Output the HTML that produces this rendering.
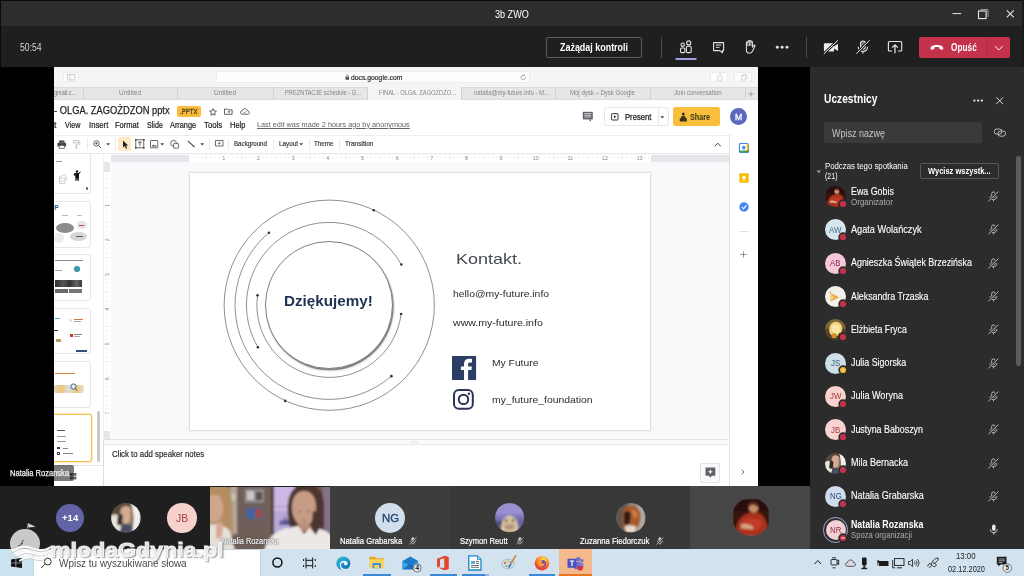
<!DOCTYPE html>
<html>
<head>
<meta charset="utf-8">
<title>3b ZWO</title>
<style>
*{box-sizing:border-box;margin:0;padding:0}
html,body{width:1024px;height:576px;overflow:hidden;background:#000}
body{font-family:"Liberation Sans",sans-serif;position:relative;color:#fff}
.abs{position:absolute}
.t{position:absolute;white-space:nowrap;transform-origin:0 50%;}
svg{overflow:visible}
</style>
</head>
<body>
<!-- chrome -->
<div class="abs" style="left:0px;top:0px;width:1024px;height:26px;background:#2d2d2d;border-top:1px solid #0c0c0c;"></div>
<div class="t" style="left:494.9px;top:9.5px;font-size:10.0px;height:10.0px;line-height:10.0px;color:#fff;transform:scaleX(0.908);">3b ZWO</div>
<svg class="abs" style="left:950px;top:5px;" width="70" height="18" viewBox="0 0 70 18">
      <path d="M2.5 8.6h8.7" stroke="#e8e8e8" stroke-width="1" fill="none"/>
      <path d="M30.5 4.5h7.5v7.5" stroke="#9a9a9a" stroke-width="1" fill="none"/>
      <rect x="28.5" y="6.0" width="7.6" height="7.6" stroke="#e8e8e8" stroke-width="1.1" fill="none"/>
      <path d="M56.8 5.4l7 7M63.8 5.4l-7 7" stroke="#e8e8e8" stroke-width="1.1" fill="none"/></svg>
<div class="abs" style="left:0px;top:26px;width:1024px;height:41px;background:#1f1f1f;"></div>
<div class="abs" style="left:0px;top:0px;width:1px;height:549px;background:#0a0a0a;"></div>
<div class="abs" style="left:1022px;top:0px;width:2px;height:67px;background:#191919;"></div>
<div class="t" style="left:19.7px;top:43.1px;font-size:10.3px;height:10.3px;line-height:10.3px;color:#d6d6d6;transform:scaleX(0.842);">50:54</div>
<div class="abs" style="left:546px;top:37px;width:96px;height:21px;background:#1f1f1f;border:1px solid #5c5c5c;border-radius:2px;"></div>
<div class="t" style="left:560.2px;top:42.0px;font-size:11.5px;height:11.5px;line-height:11.5px;color:#fff;font-weight:700;transform:scaleX(0.777);">Zażądaj kontroli</div>
<div class="abs" style="left:661px;top:37px;width:1px;height:21px;background:#4a4a4a;"></div>
<div class="abs" style="left:806px;top:37px;width:1px;height:21px;background:#4a4a4a;"></div>
<svg class="abs" style="left:676px;top:38px;" width="22" height="24" viewBox="0 0 22 24">
      <g fill="none" stroke="#e2e2e2" stroke-width="1.1">
      <circle cx="6.7" cy="6.7" r="1.7"/>
      <rect x="4.5" y="10.0" width="4.4" height="4.6" rx="1.1"/>
      <circle cx="12.7" cy="4.9" r="2.0"/>
      <rect x="10.4" y="8.3" width="4.8" height="6.3" rx="1.2"/>
      </g>
      <rect x="-0.7" y="20.0" width="21.4" height="1.9" rx="0.9" fill="#9ea0e6"/></svg>
<svg class="abs" style="left:712px;top:40px;" width="14" height="15" viewBox="0 0 14 15">
      <path d="M1.6 2.6h10v8h-1.2v2.3l-2.6-2.3H1.6z" fill="none" stroke="#e2e2e2" stroke-width="1.1" stroke-linejoin="round"/>
      <path d="M3.9 5.0h5.4M3.9 7.3h3.6" stroke="#e2e2e2" stroke-width="1"/></svg>
<svg class="abs" style="left:743px;top:39px;" width="14" height="16" viewBox="0 0 14 16">
      <path d="M3.4 8.6V3.6c0-.9 1.5-.9 1.5 0V2.4c0-.9 1.5-.9 1.5 0v-.3c0-.9 1.5-.9 1.5 0V3c0-.9 1.5-.9 1.5 0v5.2l1.4-1.9c.5-.6 1.6 0 1.2.8l-2.3 4.6c-.6 1.5-1.5 2.6-3.3 2.6-2 0-3-1.300-3-3.300V6.300" fill="none" stroke="#e2e2e2" stroke-width="1.05" stroke-linejoin="round" stroke-linecap="round"/>
      <path d="M4.9 3.6v3.6M6.4 2.4v4.600M7.900 3v4" stroke="#e2e2e2" stroke-width=".9" fill="none"/></svg>
<svg class="abs" style="left:774px;top:44px;" width="18" height="8" viewBox="0 0 18 8"><circle cx="3.3" cy="3.300" r="1.45" fill="#e2e2e2"/><circle cx="8.1" cy="3.3" r="1.45" fill="#e2e2e2"/><circle cx="13.0" cy="3.3" r="1.45" fill="#e2e2e2"/></svg>
<svg class="abs" style="left:822px;top:39px;" width="18" height="16" viewBox="0 0 18 16">
      <rect x="1.9" y="4.2" width="10.2" height="8.2" rx="1" fill="#f0f0f0"/>
      <path d="M12.1 7.3l3.9-2.6v7.3l-3.900-2.600z" fill="#f0f0f0"/>
      <path d="M1.4 15.300L16.400 0.900" stroke="#1f1f1f" stroke-width="2.600"/>
      <path d="M1.800 14.900L16.000 1.300" stroke="#f0f0f0" stroke-width="1.000"/></svg>
<svg class="abs" style="left:855px;top:39px;" width="16" height="16" viewBox="0 0 16 16">
      <rect x="5.5" y="1.900" width="4.900" height="8.300" rx="2.450" fill="rgba(226,226,226,.45)" stroke="#e2e2e2" stroke-width="1.05"/>
      <path d="M3.200 7.700c0 6.300 9.500 6.300 9.500 0M7.950 12.500v2.300" fill="none" stroke="#e2e2e2" stroke-width="1.05"/>
      <path d="M1.100 15.000L14.800 1.200" stroke="#1f1f1f" stroke-width="2.600"/>
      <path d="M1.300 14.800L14.600 1.300" stroke="#e2e2e2" stroke-width="1.000"/></svg>
<svg class="abs" style="left:887px;top:40px;" width="16" height="15" viewBox="0 0 16 15">
      <path d="M5.000 11.000H2.400c-.6 0-1-.4-1-1V2.500c0-.6.4-1 1-1h11.300c.6 0 1 .4 1 1V10c0 .6-.4 1-1 1h-2.600" fill="none" stroke="#e8e8e8" stroke-width="1.100"/>
      <path d="M8.000 13.300V5.000M5.200 7.700L8.000 4.900l2.800 2.800" fill="none" stroke="#e8e8e8" stroke-width="1.200"/></svg>
<div class="abs" style="left:919.4px;top:36.8px;width:90.2px;height:21.4px;background:#c4314b;border-radius:2px;"></div>
<div class="abs" style="left:987px;top:36.8px;width:1px;height:21.4px;background:#b12a42;"></div>
<svg class="abs" style="left:930px;top:44px;" width="14" height="7" viewBox="0 0 14 7"><path d="M0.600 4.300C0.600 2.000 3.700 1.000 6.900 1.000s6.300 1.000 6.300 3.300c0 .9-.3 1.500-.8 1.500l-2.500-.6c-.5-.1-.6-.5-.6-1.200V3.400C8.500 3.000 5.300 3.000 4.500 3.400V4.000c0 .7-.1 1.100-.6 1.200l-2.500.6c-.5 0-.8-.6-.8-1.500z" fill="#fff"/></svg>
<div class="t" style="left:951.0px;top:42.0px;font-size:11.5px;height:11.5px;line-height:11.5px;color:#fff;font-weight:700;transform:scaleX(0.721);">Opuść</div>
<svg class="abs" style="left:994px;top:45px;" width="10" height="6" viewBox="0 0 10 6"><path d="M0.800 1.000L4.800 5.000L8.800 1.000" fill="none" stroke="#fff" stroke-width="1.000"/></svg>
<!-- stage -->
<div class="abs" style="left:0px;top:67px;width:810px;height:419.4px;background:#000;"></div>
<div class="abs" style="left:54px;top:67px;width:703.6px;height:419.3px;background:#fff;overflow:hidden;"></div>
<div class="abs" style="left:54px;top:67px;width:703.6px;height:19.5px;background:#f5f5f5;"></div>
<div class="abs" style="left:62.7px;top:71.8px;width:16.1px;height:9.8px;background:#fdfdfd;border:1px solid #ececec;border-radius:2px;"></div>
<svg class="abs" style="left:66.5px;top:73.5px;" width="9" height="7" viewBox="0 0 9 7"><rect x=".500" y=".500" width="7.500" height="5.500" fill="none" stroke="#bdbdbd" stroke-width=".700"/><path d="M3.000 .500v5.500" stroke="#bdbdbd" stroke-width=".700"/></svg>
<div class="abs" style="left:215.5px;top:71.3px;width:314.5px;height:11.7px;background:#fdfdfd;border:1px solid #ececec;border-radius:2.500px;"></div>
<svg class="abs" style="left:344.5px;top:73.8px;" width="5" height="7" viewBox="0 0 5 7"><rect x=".500" y="2.800" width="3.600" height="3.000" fill="#555"/><path d="M1.200 2.800V1.900c0-1.400 2.200-1.400 2.200 0v.900" fill="none" stroke="#555" stroke-width=".600"/></svg>
<div class="t" style="left:351.0px;top:73.8px;font-size:7.2px;height:7.2px;line-height:7.2px;color:#2a2a2a;transform:scaleX(0.946);-webkit-text-stroke:.200px #2a2a2a;">docs.google.com</div>
<svg class="abs" style="left:520px;top:73.5px;" width="7" height="7" viewBox="0 0 7 7"><path d="M5.600 3.400a2.300 2.300 0 1 1-.8-1.700" fill="none" stroke="#8a8a8a" stroke-width=".700"/><path d="M4.000 .400l1.200 1.300-1.600.500z" fill="#8a8a8a"/></svg>
<div class="abs" style="left:710.4px;top:72px;width:18px;height:10px;background:#fdfdfd;border:1px solid #ececec;border-radius:2px;"></div>
<div class="abs" style="left:734.4px;top:72px;width:18px;height:10px;background:#fdfdfd;border:1px solid #ececec;border-radius:2px;"></div>
<svg class="abs" style="left:716.5px;top:73.3px;" width="6" height="8" viewBox="0 0 6 8"><path d="M1.800 2.800H.600v4.400h4.600V2.800H4.000M2.900 4.600V.600M1.800 1.600L2.900.500l1.100 1.100" fill="none" stroke="#c4c4c4" stroke-width=".600"/></svg>
<svg class="abs" style="left:740.5px;top:73.8px;" width="7" height="7" viewBox="0 0 7 7"><rect x=".500" y="1.800" width="4.200" height="4.200" fill="none" stroke="#c4c4c4" stroke-width=".600"/><path d="M1.900 1.800V.500h4.200v4.200H4.700" fill="none" stroke="#c4c4c4" stroke-width=".600"/></svg>
<div class="abs" style="left:54px;top:86.5px;width:703.6px;height:13.5px;background:#e6e6e6;border-top:1px solid #dadada;border-bottom:1px solid #dcdcdc;"></div>
<div class="abs" style="left:367px;top:87px;width:94.3px;height:13.0px;background:#f5f5f5;"></div>
<div class="abs" style="left:82.5px;top:87px;width:1px;height:12.5px;background:#d2d2d2;"></div>
<div class="abs" style="left:177.4px;top:87px;width:1px;height:12.5px;background:#d2d2d2;"></div>
<div class="abs" style="left:272.7px;top:87px;width:1px;height:12.5px;background:#d2d2d2;"></div>
<div class="abs" style="left:367px;top:87px;width:1px;height:12.5px;background:#d2d2d2;"></div>
<div class="abs" style="left:461.3px;top:87px;width:1px;height:12.5px;background:#d2d2d2;"></div>
<div class="abs" style="left:555.4px;top:87px;width:1px;height:12.5px;background:#d2d2d2;"></div>
<div class="abs" style="left:650.3px;top:87px;width:1px;height:12.5px;background:#d2d2d2;"></div>
<div class="abs" style="left:745.2px;top:87px;width:1px;height:12.5px;background:#d2d2d2;"></div>
<div class="t" style="left:118.9px;top:90.2px;font-size:6.3px;height:6.3px;line-height:6.3px;color:#858585;transform:scaleX(1.030);">Untitled</div>
<div class="t" style="left:214.1px;top:90.2px;font-size:6.3px;height:6.3px;line-height:6.3px;color:#858585;transform:scaleX(1.030);">Untitled</div>
<div class="t" style="left:285.2px;top:90.2px;font-size:6.3px;height:6.3px;line-height:6.3px;color:#858585;transform:scaleX(0.910);">PREZNTACJE schedule - G...</div>
<div class="t" style="left:379.0px;top:90.2px;font-size:6.3px;height:6.3px;line-height:6.3px;color:#858585;transform:scaleX(0.912);">FINAL - OLGA. ZAGOŻDZO...</div>
<div class="t" style="left:474.2px;top:90.2px;font-size:6.3px;height:6.3px;line-height:6.3px;color:#858585;transform:scaleX(0.943);">natalia@my-future.info - M...</div>
<div class="t" style="left:570.3px;top:90.2px;font-size:6.3px;height:6.3px;line-height:6.3px;color:#858585;transform:scaleX(0.957);">Mój dysk – Dysk Google</div>
<div class="t" style="left:674.0px;top:90.2px;font-size:6.3px;height:6.3px;line-height:6.3px;color:#858585;transform:scaleX(0.971);">Join conversation</div>
<div class="t" style="left:54.2px;top:90.2px;font-size:6.3px;height:6.3px;line-height:6.3px;color:#7a7a7a;transform:scaleX(0.873);">gmail.c...</div>
<svg class="abs" style="left:747.5px;top:90.5px;" width="6" height="6" viewBox="0 0 6 6"><path d="M3.000 .500v5.000M.500 3.000h5.000" stroke="#8a8a8a" stroke-width=".700"/></svg>
<div class="t" style="left:54.4px;top:105.1px;font-size:11.2px;height:11.2px;line-height:11.2px;color:#1f1f1f;transform:scaleX(0.834);-webkit-text-stroke:.250px #1f1f1f;">- OLGA. ZAGOŻDZON pptx</div>
<div class="abs" style="left:177px;top:106px;width:24.4px;height:10.5px;background:#f9bc3b;border-radius:2px;"></div>
<div class="t" style="left:179.7px;top:108.6px;font-size:6.8px;height:6.8px;line-height:6.8px;color:#4f401c;transform:scaleX(0.896);-webkit-text-stroke:.300px #4f401c;">.PPTX</div>
<svg class="abs" style="left:209px;top:107.5px;" width="8" height="8" viewBox="0 0 8 8"><path d="M4.000 .700l1.000 2.200 2.400.300-1.800 1.600.500 2.400L4.000 6.000 1.900 7.200l.500-2.400L.600 3.200l2.400-.300z" fill="none" stroke="#4a4d51" stroke-width=".900" stroke-linejoin="round"/></svg>
<svg class="abs" style="left:224px;top:108px;" width="9" height="7" viewBox="0 0 9 7"><path d="M.500 1.000h2.800l.800.900h4.000v4.400H.500z" fill="none" stroke="#4a4d51" stroke-width=".900"/><path d="M3.300 3.900h2.400M4.900 3.000l.900.900-.900.900" fill="none" stroke="#4a4d51" stroke-width=".750"/></svg>
<svg class="abs" style="left:240px;top:108px;" width="10" height="7" viewBox="0 0 10 7"><path d="M2.500 6.200c-1.200 0-2.000-.700-2.000-1.700 0-1.000.800-1.700 1.800-1.700.300-1.300 1.300-2.100 2.600-2.100 1.300 0 2.400.900 2.600 2.200 1.000 0 1.800.700 1.800 1.700 0 .900-.800 1.600-1.800 1.600z" fill="none" stroke="#4a4d51" stroke-width=".900"/><path d="M3.600 3.900l.900.900 1.500-1.500" fill="none" stroke="#4a4d51" stroke-width=".750"/></svg>
<div class="t" style="left:54.4px;top:120.7px;font-size:8.6px;height:8.6px;line-height:8.6px;color:#202124;transform:scaleX(1.005);-webkit-text-stroke:.200px #202124;">t</div>
<div class="t" style="left:65.1px;top:120.7px;font-size:8.6px;height:8.6px;line-height:8.6px;color:#202124;transform:scaleX(0.833);-webkit-text-stroke:.200px #202124;">View</div>
<div class="t" style="left:88.6px;top:120.7px;font-size:8.6px;height:8.6px;line-height:8.6px;color:#202124;transform:scaleX(0.897);-webkit-text-stroke:.200px #202124;">Insert</div>
<div class="t" style="left:115.2px;top:120.7px;font-size:8.6px;height:8.6px;line-height:8.6px;color:#202124;transform:scaleX(0.877);-webkit-text-stroke:.200px #202124;">Format</div>
<div class="t" style="left:146.9px;top:120.7px;font-size:8.6px;height:8.6px;line-height:8.6px;color:#202124;transform:scaleX(0.831);-webkit-text-stroke:.200px #202124;">Slide</div>
<div class="t" style="left:170.4px;top:120.7px;font-size:8.6px;height:8.6px;line-height:8.6px;color:#202124;transform:scaleX(0.853);-webkit-text-stroke:.200px #202124;">Arrange</div>
<div class="t" style="left:204.3px;top:120.7px;font-size:8.6px;height:8.6px;line-height:8.6px;color:#202124;transform:scaleX(0.902);-webkit-text-stroke:.200px #202124;">Tools</div>
<div class="t" style="left:229.9px;top:120.7px;font-size:8.6px;height:8.6px;line-height:8.6px;color:#202124;transform:scaleX(0.871);-webkit-text-stroke:.200px #202124;">Help</div>
<div class="t" style="left:256.8px;top:121.0px;font-size:8.0px;height:8.0px;line-height:8.0px;color:#5f6368;transform:scaleX(0.911);text-decoration:underline;">Last edit was made 2 hours ago by anonymous</div>
<svg class="abs" style="left:582px;top:110.5px;" width="12" height="12" viewBox="0 0 12 12"><path d="M.800 .800h10.000v7.600H4.500v0H.800z" fill="#5f6368"/><path d="M8.800 8.400v2.400l-2.400-2.400z" fill="#5f6368"/><path d="M2.300 2.600h7.000M2.300 4.300h7.000M2.300 6.000h7.000" stroke="#fff" stroke-width=".700"/></svg>
<div class="abs" style="left:604.2px;top:107.3px;width:64.6px;height:18.7px;background:#fff;border:1px solid #e6e7ea;border-radius:2.500px;"></div>
<div class="abs" style="left:657.5px;top:107.3px;width:1px;height:18.7px;background:#e6e7ea;"></div>
<svg class="abs" style="left:611px;top:113px;" width="8" height="8" viewBox="0 0 8 8"><rect x=".600" y=".600" width="6.400" height="6.400" rx=".600" fill="none" stroke="#202124" stroke-width=".900"/><path d="M3.000 2.300l2.200 1.500-2.200 1.500z" fill="#202124"/></svg>
<div class="t" style="left:625.0px;top:112.5px;font-size:8.3px;height:8.3px;line-height:8.3px;color:#202124;transform:scaleX(0.926);-webkit-text-stroke:.250px #202124;">Present</div>
<svg class="abs" style="left:660.3px;top:115.5px;" width="5" height="3" viewBox="0 0 5 3"><path d="M.300 .300h4.000L2.300 2.600z" fill="#444"/></svg>
<div class="abs" style="left:673.1px;top:107.3px;width:46.5px;height:18.7px;background:#f9bf3c;border-radius:2.500px;"></div>
<svg class="abs" style="left:679px;top:111.5px;" width="9" height="10" viewBox="0 0 9 10"><circle cx="4.300" cy="2.000" r="1.500" fill="#3c3416"/><path d="M2.000 6.000c0-1.500 1.000-2.200 2.300-2.200s2.300.700 2.300 2.200z" fill="#3c3416"/><rect x=".800" y="6.000" width="7.000" height="3.500" rx=".500" fill="#3c3416"/></svg>
<div class="t" style="left:690.3px;top:112.5px;font-size:8.3px;height:8.3px;line-height:8.3px;color:#3c3416;font-weight:700;transform:scaleX(0.871);">Share</div>
<div class="abs" style="left:730px;top:107.9px;width:17.2px;height:17.2px;background:#5b6abf;border-radius:50%;"></div>
<div class="t" style="left:735.1px;top:111.8px;font-size:9.8px;height:9.8px;line-height:9.8px;color:#fff;transform:scaleX(0.882);-webkit-text-stroke:.300px #fff;">M</div>
<div class="abs" style="left:54px;top:134.5px;width:674.6px;height:1px;background:#eeeeee;"></div>
<div class="abs" style="left:54px;top:153.3px;width:674.6px;height:1px;background:#e9e9e9;"></div>
<svg class="abs" style="left:57.3px;top:139.5px;" width="10" height="9" viewBox="0 0 10 9"><rect x="2.000" y=".500" width="5.500" height="2.200" fill="#444746"/><rect x=".400" y="2.800" width="8.700" height="3.800" rx=".600" fill="#444746"/><rect x="2.200" y="5.300" width="5.000" height="3.000" fill="#fff" stroke="#444746" stroke-width=".700"/></svg>
<svg class="abs" style="left:73px;top:139.5px;" width="8" height="9" viewBox="0 0 8 9"><rect x=".500" y=".500" width="5.000" height="2.300" fill="none" stroke="#bdbdbd" stroke-width=".800"/><path d="M5.500 1.600h1.300v2.500H3.300v1.300" fill="none" stroke="#bdbdbd" stroke-width=".700"/><rect x="2.600" y="5.300" width="1.500" height="3.300" fill="#bdbdbd"/></svg>
<div class="abs" style="left:86.6px;top:138.5px;width:1px;height:11px;background:#ebebeb;"></div>
<div class="abs" style="left:115.4px;top:138.5px;width:1px;height:11px;background:#ebebeb;"></div>
<div class="abs" style="left:209.2px;top:138.5px;width:1px;height:11px;background:#ebebeb;"></div>
<div class="abs" style="left:228.2px;top:138.5px;width:1px;height:11px;background:#ebebeb;"></div>
<div class="abs" style="left:272.7px;top:138.5px;width:1px;height:11px;background:#ebebeb;"></div>
<div class="abs" style="left:308.6px;top:138.5px;width:1px;height:11px;background:#ebebeb;"></div>
<div class="abs" style="left:339px;top:138.5px;width:1px;height:11px;background:#ebebeb;"></div>
<svg class="abs" style="left:92.5px;top:139.5px;" width="9" height="9" viewBox="0 0 9 9"><circle cx="3.400" cy="3.400" r="2.700" fill="none" stroke="#444746" stroke-width=".800"/><path d="M5.400 5.400L8.000 8.000M2.100 3.400h2.600M3.400 2.100v2.600" stroke="#444746" stroke-width=".800"/></svg>
<svg class="abs" style="left:105.9px;top:143px;" width="5" height="3" viewBox="0 0 5 3"><path d="M.300 .300h3.800L2.200 2.400z" fill="#444746"/></svg>
<div class="abs" style="left:117.9px;top:137.4px;width:12.8px;height:13.2px;background:#fdeac4;border-radius:1.500px;"></div>
<svg class="abs" style="left:121.5px;top:139.5px;" width="7" height="10" viewBox="0 0 7 10"><path d="M1.000 .500v7.000l1.700-1.600 1.200 2.800 1.200-.500-1.200-2.700h2.300z" fill="#1f1f1f"/></svg>
<svg class="abs" style="left:134.5px;top:139px;" width="10" height="10" viewBox="0 0 10 10"><rect x=".800" y=".800" width="8.000" height="8.000" fill="none" stroke="#444746" stroke-width=".800"/><path d="M3.000 3.200h3.800M4.900 3.200v3.800" stroke="#444746" stroke-width=".900"/><rect x="0" y="0" width="1.600" height="1.600" fill="#444746"/><rect x="8.000" y="0" width="1.600" height="1.600" fill="#444746"/><rect x="0" y="8.000" width="1.600" height="1.600" fill="#444746"/><rect x="8.000" y="8.000" width="1.600" height="1.600" fill="#444746"/></svg>
<svg class="abs" style="left:149.5px;top:139.5px;" width="9" height="9" viewBox="0 0 9 9"><rect x=".500" y=".500" width="7.300" height="7.300" rx=".500" fill="none" stroke="#444746" stroke-width=".800"/><path d="M1.500 6.500l1.800-2.000 1.300 1.300.900-.900 1.500 1.600z" fill="#444746"/></svg>
<svg class="abs" style="left:159.8px;top:143px;" width="5" height="3" viewBox="0 0 5 3"><path d="M.300 .300h3.800L2.200 2.400z" fill="#444746"/></svg>
<svg class="abs" style="left:170px;top:139.5px;" width="10" height="9" viewBox="0 0 10 9"><circle cx="3.600" cy="3.300" r="2.900" fill="none" stroke="#444746" stroke-width=".800"/><rect x="3.600" y="3.600" width="5.000" height="4.600" rx=".500" fill="#fff" stroke="#444746" stroke-width=".800"/></svg>
<svg class="abs" style="left:186.5px;top:140px;" width="9" height="8" viewBox="0 0 9 8"><path d="M.800 .800L7.500 7.000" stroke="#444746" stroke-width="1.100"/></svg>
<svg class="abs" style="left:199.9px;top:143px;" width="5" height="3" viewBox="0 0 5 3"><path d="M.300 .300h3.800L2.200 2.400z" fill="#444746"/></svg>
<svg class="abs" style="left:214.5px;top:139.5px;" width="9" height="9" viewBox="0 0 9 9"><path d="M.500 .500h7.500v5.500H4.000v0H.500z" fill="none" stroke="#444746" stroke-width=".800"/><path d="M4.300 1.800v2.800M2.900 3.200h2.800" stroke="#444746" stroke-width=".700"/></svg>
<div class="t" style="left:234.3px;top:140.4px;font-size:7.0px;height:7.0px;line-height:7.0px;color:#3c4043;transform:scaleX(0.883);-webkit-text-stroke:.200px #3c4043;">Background</div>
<div class="t" style="left:278.9px;top:140.4px;font-size:7.0px;height:7.0px;line-height:7.0px;color:#3c4043;transform:scaleX(0.904);-webkit-text-stroke:.200px #3c4043;">Layout</div>
<svg class="abs" style="left:299.0px;top:143px;" width="5" height="3" viewBox="0 0 5 3"><path d="M.300 .300h3.800L2.200 2.400z" fill="#444746"/></svg>
<div class="t" style="left:313.7px;top:140.4px;font-size:7.0px;height:7.0px;line-height:7.0px;color:#3c4043;transform:scaleX(0.895);-webkit-text-stroke:.200px #3c4043;">Theme</div>
<div class="t" style="left:344.5px;top:140.4px;font-size:7.0px;height:7.0px;line-height:7.0px;color:#3c4043;transform:scaleX(0.935);-webkit-text-stroke:.200px #3c4043;">Transition</div>
<svg class="abs" style="left:713.5px;top:141.5px;" width="8" height="5" viewBox="0 0 8 5"><path d="M.800 4.300L3.800 1.200l3.000 3.100" fill="none" stroke="#444" stroke-width="1.000"/></svg>
<div class="abs" style="left:110.5px;top:154.3px;width:618px;height:284.3px;background:#f8f9fb;"></div>
<div class="abs" style="left:110.5px;top:154.6px;width:618px;height:7.0px;background:#e5e6eb;"></div>
<div class="abs" style="left:189.2px;top:154.6px;width:461.5px;height:7.0px;background:#fff;"></div>
<svg class="abs" style="left:0px;top:0px;" width="1024" height="576" viewBox="0 0 1024 576"><text x="223.8" y="160.0" font-size="5.2" fill="#80868b" text-anchor="middle" font-family="Liberation Sans">1</text><text x="258.5" y="160.0" font-size="5.2" fill="#80868b" text-anchor="middle" font-family="Liberation Sans">2</text><text x="293.1" y="160.0" font-size="5.2" fill="#80868b" text-anchor="middle" font-family="Liberation Sans">3</text><text x="327.8" y="160.0" font-size="5.2" fill="#80868b" text-anchor="middle" font-family="Liberation Sans">4</text><text x="362.4" y="160.0" font-size="5.2" fill="#80868b" text-anchor="middle" font-family="Liberation Sans">5</text><text x="397.1" y="160.0" font-size="5.2" fill="#80868b" text-anchor="middle" font-family="Liberation Sans">6</text><text x="431.8" y="160.0" font-size="5.2" fill="#80868b" text-anchor="middle" font-family="Liberation Sans">7</text><text x="466.4" y="160.0" font-size="5.2" fill="#80868b" text-anchor="middle" font-family="Liberation Sans">8</text><text x="501.0" y="160.0" font-size="5.2" fill="#80868b" text-anchor="middle" font-family="Liberation Sans">9</text><text x="535.7" y="160.0" font-size="5.2" fill="#80868b" text-anchor="middle" font-family="Liberation Sans">10</text><text x="570.3" y="160.0" font-size="5.2" fill="#80868b" text-anchor="middle" font-family="Liberation Sans">11</text><text x="605.0" y="160.0" font-size="5.2" fill="#80868b" text-anchor="middle" font-family="Liberation Sans">12</text><text x="639.6" y="160.0" font-size="5.2" fill="#80868b" text-anchor="middle" font-family="Liberation Sans">13</text><rect x="193.5" y="157.0" width=".500" height="1.3" fill="#c3c6ca"/><rect x="197.9" y="157.0" width=".500" height="1.3" fill="#c3c6ca"/><rect x="202.2" y="157.0" width=".500" height="1.3" fill="#c3c6ca"/><rect x="206.5" y="156.2" width=".500" height="2.8" fill="#c3c6ca"/><rect x="210.9" y="157.0" width=".500" height="1.3" fill="#c3c6ca"/><rect x="215.2" y="157.0" width=".500" height="1.3" fill="#c3c6ca"/><rect x="219.5" y="157.0" width=".500" height="1.3" fill="#c3c6ca"/><rect x="228.2" y="157.0" width=".500" height="1.3" fill="#c3c6ca"/><rect x="232.5" y="157.0" width=".500" height="1.3" fill="#c3c6ca"/><rect x="236.8" y="157.0" width=".500" height="1.3" fill="#c3c6ca"/><rect x="241.2" y="156.2" width=".500" height="2.8" fill="#c3c6ca"/><rect x="245.5" y="157.0" width=".500" height="1.3" fill="#c3c6ca"/><rect x="249.8" y="157.0" width=".500" height="1.3" fill="#c3c6ca"/><rect x="254.2" y="157.0" width=".500" height="1.3" fill="#c3c6ca"/><rect x="262.8" y="157.0" width=".500" height="1.3" fill="#c3c6ca"/><rect x="267.2" y="157.0" width=".500" height="1.3" fill="#c3c6ca"/><rect x="271.5" y="157.0" width=".500" height="1.3" fill="#c3c6ca"/><rect x="275.8" y="156.2" width=".500" height="2.8" fill="#c3c6ca"/><rect x="280.2" y="157.0" width=".500" height="1.3" fill="#c3c6ca"/><rect x="284.5" y="157.0" width=".500" height="1.3" fill="#c3c6ca"/><rect x="288.8" y="157.0" width=".500" height="1.3" fill="#c3c6ca"/><rect x="297.5" y="157.0" width=".500" height="1.3" fill="#c3c6ca"/><rect x="301.8" y="157.0" width=".500" height="1.3" fill="#c3c6ca"/><rect x="306.1" y="157.0" width=".500" height="1.3" fill="#c3c6ca"/><rect x="310.5" y="156.2" width=".500" height="2.8" fill="#c3c6ca"/><rect x="314.8" y="157.0" width=".500" height="1.3" fill="#c3c6ca"/><rect x="319.1" y="157.0" width=".500" height="1.3" fill="#c3c6ca"/><rect x="323.5" y="157.0" width=".500" height="1.3" fill="#c3c6ca"/><rect x="332.1" y="157.0" width=".500" height="1.3" fill="#c3c6ca"/><rect x="336.5" y="157.0" width=".500" height="1.3" fill="#c3c6ca"/><rect x="340.8" y="157.0" width=".500" height="1.3" fill="#c3c6ca"/><rect x="345.1" y="156.2" width=".500" height="2.8" fill="#c3c6ca"/><rect x="349.5" y="157.0" width=".500" height="1.3" fill="#c3c6ca"/><rect x="353.8" y="157.0" width=".500" height="1.3" fill="#c3c6ca"/><rect x="358.1" y="157.0" width=".500" height="1.3" fill="#c3c6ca"/><rect x="366.8" y="157.0" width=".500" height="1.3" fill="#c3c6ca"/><rect x="371.1" y="157.0" width=".500" height="1.3" fill="#c3c6ca"/><rect x="375.4" y="157.0" width=".500" height="1.3" fill="#c3c6ca"/><rect x="379.8" y="156.2" width=".500" height="2.8" fill="#c3c6ca"/><rect x="384.1" y="157.0" width=".500" height="1.3" fill="#c3c6ca"/><rect x="388.4" y="157.0" width=".500" height="1.3" fill="#c3c6ca"/><rect x="392.8" y="157.0" width=".500" height="1.3" fill="#c3c6ca"/><rect x="401.4" y="157.0" width=".500" height="1.3" fill="#c3c6ca"/><rect x="405.8" y="157.0" width=".500" height="1.3" fill="#c3c6ca"/><rect x="410.1" y="157.0" width=".500" height="1.3" fill="#c3c6ca"/><rect x="414.4" y="156.2" width=".500" height="2.8" fill="#c3c6ca"/><rect x="418.8" y="157.0" width=".500" height="1.3" fill="#c3c6ca"/><rect x="423.1" y="157.0" width=".500" height="1.3" fill="#c3c6ca"/><rect x="427.4" y="157.0" width=".500" height="1.3" fill="#c3c6ca"/><rect x="436.1" y="157.0" width=".500" height="1.3" fill="#c3c6ca"/><rect x="440.4" y="157.0" width=".500" height="1.3" fill="#c3c6ca"/><rect x="444.7" y="157.0" width=".500" height="1.3" fill="#c3c6ca"/><rect x="449.1" y="156.2" width=".500" height="2.8" fill="#c3c6ca"/><rect x="453.4" y="157.0" width=".500" height="1.3" fill="#c3c6ca"/><rect x="457.7" y="157.0" width=".500" height="1.3" fill="#c3c6ca"/><rect x="462.1" y="157.0" width=".500" height="1.3" fill="#c3c6ca"/><rect x="470.7" y="157.0" width=".500" height="1.3" fill="#c3c6ca"/><rect x="475.1" y="157.0" width=".500" height="1.3" fill="#c3c6ca"/><rect x="479.4" y="157.0" width=".500" height="1.3" fill="#c3c6ca"/><rect x="483.7" y="156.2" width=".500" height="2.8" fill="#c3c6ca"/><rect x="488.1" y="157.0" width=".500" height="1.3" fill="#c3c6ca"/><rect x="492.4" y="157.0" width=".500" height="1.3" fill="#c3c6ca"/><rect x="496.7" y="157.0" width=".500" height="1.3" fill="#c3c6ca"/><rect x="505.4" y="157.0" width=".500" height="1.3" fill="#c3c6ca"/><rect x="509.7" y="157.0" width=".500" height="1.3" fill="#c3c6ca"/><rect x="514.0" y="157.0" width=".500" height="1.3" fill="#c3c6ca"/><rect x="518.4" y="156.2" width=".500" height="2.8" fill="#c3c6ca"/><rect x="522.7" y="157.0" width=".500" height="1.3" fill="#c3c6ca"/><rect x="527.0" y="157.0" width=".500" height="1.3" fill="#c3c6ca"/><rect x="531.4" y="157.0" width=".500" height="1.3" fill="#c3c6ca"/><rect x="540.0" y="157.0" width=".500" height="1.3" fill="#c3c6ca"/><rect x="544.4" y="157.0" width=".500" height="1.3" fill="#c3c6ca"/><rect x="548.7" y="157.0" width=".500" height="1.3" fill="#c3c6ca"/><rect x="553.0" y="156.2" width=".500" height="2.8" fill="#c3c6ca"/><rect x="557.4" y="157.0" width=".500" height="1.3" fill="#c3c6ca"/><rect x="561.7" y="157.0" width=".500" height="1.3" fill="#c3c6ca"/><rect x="566.0" y="157.0" width=".500" height="1.3" fill="#c3c6ca"/><rect x="574.7" y="157.0" width=".500" height="1.3" fill="#c3c6ca"/><rect x="579.0" y="157.0" width=".500" height="1.3" fill="#c3c6ca"/><rect x="583.3" y="157.0" width=".500" height="1.3" fill="#c3c6ca"/><rect x="587.7" y="156.2" width=".500" height="2.8" fill="#c3c6ca"/><rect x="592.0" y="157.0" width=".500" height="1.3" fill="#c3c6ca"/><rect x="596.3" y="157.0" width=".500" height="1.3" fill="#c3c6ca"/><rect x="600.7" y="157.0" width=".500" height="1.3" fill="#c3c6ca"/><rect x="609.3" y="157.0" width=".500" height="1.3" fill="#c3c6ca"/><rect x="613.7" y="157.0" width=".500" height="1.3" fill="#c3c6ca"/><rect x="618.0" y="157.0" width=".500" height="1.3" fill="#c3c6ca"/><rect x="622.3" y="156.2" width=".500" height="2.8" fill="#c3c6ca"/><rect x="626.7" y="157.0" width=".500" height="1.3" fill="#c3c6ca"/><rect x="631.0" y="157.0" width=".500" height="1.3" fill="#c3c6ca"/><rect x="635.3" y="157.0" width=".500" height="1.3" fill="#c3c6ca"/><rect x="644.0" y="157.0" width=".500" height="1.3" fill="#c3c6ca"/><rect x="648.3" y="157.0" width=".500" height="1.3" fill="#c3c6ca"/></svg>
<div class="abs" style="left:103.8px;top:161.6px;width:6.7px;height:277.0px;background:#e5e6eb;"></div>
<div class="abs" style="left:103.8px;top:171.5px;width:6.7px;height:259.8px;background:#fff;"></div>
<svg class="abs" style="left:0px;top:0px;" width="1024" height="576" viewBox="0 0 1024 576"><text x="0" y="0" font-size="5.2" fill="#80868b" text-anchor="middle" font-family="Liberation Sans" transform="translate(109.2 205.2) rotate(-90)">1</text><text x="0" y="0" font-size="5.2" fill="#80868b" text-anchor="middle" font-family="Liberation Sans" transform="translate(109.2 239.9) rotate(-90)">2</text><text x="0" y="0" font-size="5.2" fill="#80868b" text-anchor="middle" font-family="Liberation Sans" transform="translate(109.2 274.5) rotate(-90)">3</text><text x="0" y="0" font-size="5.2" fill="#80868b" text-anchor="middle" font-family="Liberation Sans" transform="translate(109.2 309.2) rotate(-90)">4</text><text x="0" y="0" font-size="5.2" fill="#80868b" text-anchor="middle" font-family="Liberation Sans" transform="translate(109.2 343.9) rotate(-90)">5</text><text x="0" y="0" font-size="5.2" fill="#80868b" text-anchor="middle" font-family="Liberation Sans" transform="translate(109.2 378.5) rotate(-90)">6</text><text x="0" y="0" font-size="5.2" fill="#80868b" text-anchor="middle" font-family="Liberation Sans" transform="translate(109.2 413.1) rotate(-90)">7</text><rect x="106.0" y="174.9" width="1.3" height=".500" fill="#c3c6ca"/><rect x="106.0" y="179.3" width="1.3" height=".500" fill="#c3c6ca"/><rect x="106.0" y="183.6" width="1.3" height=".500" fill="#c3c6ca"/><rect x="105.2" y="187.9" width="2.8" height=".500" fill="#c3c6ca"/><rect x="106.0" y="192.3" width="1.3" height=".500" fill="#c3c6ca"/><rect x="106.0" y="196.6" width="1.3" height=".500" fill="#c3c6ca"/><rect x="106.0" y="200.9" width="1.3" height=".500" fill="#c3c6ca"/><rect x="106.0" y="209.6" width="1.3" height=".500" fill="#c3c6ca"/><rect x="106.0" y="213.9" width="1.3" height=".500" fill="#c3c6ca"/><rect x="106.0" y="218.2" width="1.3" height=".500" fill="#c3c6ca"/><rect x="105.2" y="222.6" width="2.8" height=".500" fill="#c3c6ca"/><rect x="106.0" y="226.9" width="1.3" height=".500" fill="#c3c6ca"/><rect x="106.0" y="231.2" width="1.3" height=".500" fill="#c3c6ca"/><rect x="106.0" y="235.6" width="1.3" height=".500" fill="#c3c6ca"/><rect x="106.0" y="244.2" width="1.3" height=".500" fill="#c3c6ca"/><rect x="106.0" y="248.6" width="1.3" height=".500" fill="#c3c6ca"/><rect x="106.0" y="252.9" width="1.3" height=".500" fill="#c3c6ca"/><rect x="105.2" y="257.2" width="2.8" height=".500" fill="#c3c6ca"/><rect x="106.0" y="261.6" width="1.3" height=".500" fill="#c3c6ca"/><rect x="106.0" y="265.9" width="1.3" height=".500" fill="#c3c6ca"/><rect x="106.0" y="270.2" width="1.3" height=".500" fill="#c3c6ca"/><rect x="106.0" y="278.9" width="1.3" height=".500" fill="#c3c6ca"/><rect x="106.0" y="283.2" width="1.3" height=".500" fill="#c3c6ca"/><rect x="106.0" y="287.5" width="1.3" height=".500" fill="#c3c6ca"/><rect x="105.2" y="291.9" width="2.8" height=".500" fill="#c3c6ca"/><rect x="106.0" y="296.2" width="1.3" height=".500" fill="#c3c6ca"/><rect x="106.0" y="300.5" width="1.3" height=".500" fill="#c3c6ca"/><rect x="106.0" y="304.9" width="1.3" height=".500" fill="#c3c6ca"/><rect x="106.0" y="313.5" width="1.3" height=".500" fill="#c3c6ca"/><rect x="106.0" y="317.9" width="1.3" height=".500" fill="#c3c6ca"/><rect x="106.0" y="322.2" width="1.3" height=".500" fill="#c3c6ca"/><rect x="105.2" y="326.5" width="2.8" height=".500" fill="#c3c6ca"/><rect x="106.0" y="330.9" width="1.3" height=".500" fill="#c3c6ca"/><rect x="106.0" y="335.2" width="1.3" height=".500" fill="#c3c6ca"/><rect x="106.0" y="339.5" width="1.3" height=".500" fill="#c3c6ca"/><rect x="106.0" y="348.2" width="1.3" height=".500" fill="#c3c6ca"/><rect x="106.0" y="352.5" width="1.3" height=".500" fill="#c3c6ca"/><rect x="106.0" y="356.8" width="1.3" height=".500" fill="#c3c6ca"/><rect x="105.2" y="361.2" width="2.8" height=".500" fill="#c3c6ca"/><rect x="106.0" y="365.5" width="1.3" height=".500" fill="#c3c6ca"/><rect x="106.0" y="369.8" width="1.3" height=".500" fill="#c3c6ca"/><rect x="106.0" y="374.2" width="1.3" height=".500" fill="#c3c6ca"/><rect x="106.0" y="382.8" width="1.3" height=".500" fill="#c3c6ca"/><rect x="106.0" y="387.2" width="1.3" height=".500" fill="#c3c6ca"/><rect x="106.0" y="391.5" width="1.3" height=".500" fill="#c3c6ca"/><rect x="105.2" y="395.8" width="2.8" height=".500" fill="#c3c6ca"/><rect x="106.0" y="400.2" width="1.3" height=".500" fill="#c3c6ca"/><rect x="106.0" y="404.5" width="1.3" height=".500" fill="#c3c6ca"/><rect x="106.0" y="408.8" width="1.3" height=".500" fill="#c3c6ca"/><rect x="106.0" y="417.5" width="1.3" height=".500" fill="#c3c6ca"/><rect x="106.0" y="421.8" width="1.3" height=".500" fill="#c3c6ca"/><rect x="106.0" y="426.1" width="1.3" height=".500" fill="#c3c6ca"/></svg>
<div class="abs" style="left:189.2px;top:171.5px;width:461.5px;height:259.8px;background:#fff;border:1px solid #e0e0e0;box-shadow:0 0 1.500px rgba(0,0,0,.10);"></div>
<svg class="abs" style="left:0px;top:0px;" width="1024" height="576" viewBox="0 0 1024 576"><circle cx="329.25" cy="305.2" r="105.1" fill="none" stroke="#2f3548" stroke-width=".55"/><path d="M268.92 232.72A94.3 94.3 0 1 0 391.39 376.13" fill="none" stroke="#2f3548" stroke-width="0.55"/><path d="M401.39 264.56A82.8 82.8 0 1 0 257.94 347.28" fill="none" stroke="#2f3548" stroke-width="0.55"/><path d="M257.52 295.37A72.4 72.4 0 1 0 401.11 314.04" fill="none" stroke="#2f3548" stroke-width="0.55"/><circle cx="373.75" cy="210.20" r="1.3" fill="#2f3548"/><circle cx="285.20" cy="400.90" r="1.3" fill="#2f3548"/><circle cx="268.92" cy="232.72" r="1.3" fill="#2f3548"/><circle cx="391.39" cy="376.13" r="1.3" fill="#2f3548"/><circle cx="401.39" cy="264.56" r="1.3" fill="#2f3548"/><circle cx="257.94" cy="347.28" r="1.3" fill="#2f3548"/><circle cx="257.52" cy="295.37" r="1.3" fill="#2f3548"/><circle cx="401.11" cy="314.04" r="1.3" fill="#2f3548"/></svg>
<div class="abs" style="left:265.05px;top:241.0px;width:128.4px;height:128.4px;background:#fff;border-radius:50%;border:.600px solid #7d828e;box-shadow:.700px 1.300px .900px rgba(60,60,60,.620),1.200px 2.000px 2.200px rgba(0,0,0,.120);"></div>
<div class="t" style="left:284.1px;top:293.8px;font-size:14.2px;height:14.2px;line-height:14.2px;color:#1f3050;font-weight:700;transform:scaleX(1.072);">Dziękujemy!</div>
<div class="t" style="left:456.3px;top:251.6px;font-size:14.5px;height:14.5px;line-height:14.5px;color:#454a52;transform:scaleX(1.241);">Kontakt.</div>
<div class="t" style="left:453.3px;top:288.9px;font-size:9.7px;height:9.7px;line-height:9.7px;color:#2b2b2b;transform:scaleX(1.073);">hello@my-future.info</div>
<div class="t" style="left:453.3px;top:317.8px;font-size:9.7px;height:9.7px;line-height:9.7px;color:#2b2b2b;transform:scaleX(1.090);">www.my-future.info</div>
<div class="t" style="left:492.3px;top:357.9px;font-size:9.6px;height:9.6px;line-height:9.6px;color:#2b2b2b;transform:scaleX(1.074);">My Future</div>
<div class="t" style="left:492.3px;top:395.3px;font-size:9.6px;height:9.6px;line-height:9.6px;color:#2b2b2b;transform:scaleX(1.084);">my_future_foundation</div>
<svg class="abs" style="left:451.7px;top:356.25px;" width="24.1" height="24" viewBox="0 0 24.1 24"><rect x="0" y="0" width="24.100" height="24.000" fill="#2a3d64"/>
      <path d="M12.000 24.000V14.000H8.900V10.600H12.000V8.000c0-3.300 2.000-5.200 5.000-5.200 1.400 0 2.600.100 3.000.200v3.400h-2.000c-1.600 0-1.900.800-1.900 1.900V10.600h3.800l-.500 3.400h-3.300V24.000z" fill="#fff"/></svg>
<svg class="abs" style="left:453.1px;top:389px;" width="20.8" height="20.8" viewBox="0 0 20.8 20.8"><rect x="1.000" y="1.000" width="18.800" height="18.800" rx="4.800" fill="none" stroke="#2a3556" stroke-width="2.000"/>
      <circle cx="10.500" cy="10.400" r="4.700" fill="none" stroke="#2a3556" stroke-width="2.000"/><circle cx="16.000" cy="4.700" r="1.200" fill="#2a3556"/></svg>
<div class="abs" style="left:103.8px;top:438.6px;width:624.7px;height:1px;background:#e2e2e2;"></div>
<div class="abs" style="left:103.8px;top:439.6px;width:624.7px;height:4.4px;background:#fafafa;"></div>
<div class="abs" style="left:103.8px;top:444px;width:624.7px;height:1px;background:#e6e6e6;"></div>
<svg class="abs" style="left:411px;top:441px;" width="8" height="2" viewBox="0 0 8 2"><circle cx="1" cy="1" r=".600" fill="#b5b5b5"/><circle cx="3.500" cy="1" r=".600" fill="#b5b5b5"/><circle cx="6" cy="1" r=".600" fill="#b5b5b5"/></svg>
<div class="t" style="left:112.1px;top:450.0px;font-size:8.6px;height:8.6px;line-height:8.6px;color:#222;transform:scaleX(0.910);-webkit-text-stroke:.150px #222;">Click to add speaker notes</div>
<div class="abs" style="left:699.6px;top:463px;width:20.4px;height:19.5px;background:#f8f9fa;border:1px solid #e3e3e3;border-radius:2px;"></div>
<svg class="abs" style="left:704.5px;top:467.4px;" width="11" height="11" viewBox="0 0 11 11"><path d="M.500 .500h9.800v8.300H7.000L5.400 10.500 3.800 8.800H.500z" fill="#5f6368"/><path d="M5.400 2.300l.700 1.800 1.800.700-1.800.700-.700 1.800-.700-1.800-1.800-.700 1.800-.700z" fill="#fff"/></svg>
<div class="abs" style="left:728.5px;top:134.5px;width:1px;height:352px;background:#e2e2e2;"></div>
<div class="abs" style="left:729.5px;top:134.5px;width:28.1px;height:352px;background:#fff;"></div>
<svg class="abs" style="left:738.5px;top:143px;" width="10" height="10" viewBox="0 0 10 10"><rect x=".500" y=".500" width="9.000" height="9.000" rx="1.000" fill="#fff" stroke="#4285f4" stroke-width="1.200"/><path d="M.500 7.500h9.000v1.000a1 1 0 0 1-1 1h-7a1 1 0 0 1-1-1z" fill="#34a853"/><path d="M7.800 .500h.700a1 1 0 0 1 1 1v6.000H7.800z" fill="#fbbc04"/><path d="M7.800 7.500h1.700v1.000a1 1 0 0 1-1 1H7.800z" fill="#ea4335"/><rect x="3.300" y="3.000" width="3.000" height="3.300" fill="#4285f4"/></svg>
<svg class="abs" style="left:738.5px;top:173px;" width="10" height="10" viewBox="0 0 10 10"><rect x=".300" y=".300" width="9.400" height="9.400" rx="1.000" fill="#fbbc04"/><circle cx="5.000" cy="4.400" r="1.700" fill="#fff"/><rect x="4.100" y="6.300" width="1.800" height="1.300" fill="#fff"/></svg>
<svg class="abs" style="left:738.5px;top:202px;" width="10" height="10" viewBox="0 0 10 10"><circle cx="5.000" cy="5.000" r="4.700" fill="#4285f4"/><path d="M2.800 5.200l1.600 1.600 3.000-3.400" fill="none" stroke="#fff" stroke-width="1.200"/></svg>
<div class="abs" style="left:738.5px;top:231px;width:10px;height:1px;background:#e3e3e3;"></div>
<svg class="abs" style="left:740px;top:250.5px;" width="7" height="7" viewBox="0 0 7 7"><path d="M3.500 .300v6.400M.300 3.500h6.400" stroke="#6f6f6f" stroke-width=".700"/></svg>
<svg class="abs" style="left:740.5px;top:468.5px;" width="4" height="6" viewBox="0 0 4 6"><path d="M.700 .500l2.300 2.500L.700 5.500" fill="none" stroke="#555" stroke-width=".800"/></svg>
<div class="abs" style="left:54px;top:154.3px;width:49.8px;height:311px;background:#fff;"></div>
<div class="abs" style="left:54px;top:465px;width:49.8px;height:1px;background:#e6e6e6;"></div>
<div class="abs" style="left:54px;top:154.3px;width:49.8px;height:311px;overflow:hidden;"><div class="abs" style="left:-4px;top:-6.900000000000006px;width:41.0px;height:46.8px;background:#fff;border:1px solid #e6e6e6;border-radius:3px;"></div><div class="abs" style="left:-4px;top:46.5px;width:41.0px;height:46.8px;background:#fff;border:1px solid #e6e6e6;border-radius:3px;"></div><div class="abs" style="left:-4px;top:99.89999999999998px;width:41.0px;height:46.8px;background:#fff;border:1px solid #e6e6e6;border-radius:3px;"></div><div class="abs" style="left:-4px;top:153.3px;width:41.0px;height:46.8px;background:#fff;border:1px solid #e6e6e6;border-radius:3px;"></div><div class="abs" style="left:-4px;top:206.7px;width:41.0px;height:46.8px;background:#fff;border:1px solid #e6e6e6;border-radius:3px;"></div><div class="abs" style="left:-4px;top:260.09999999999997px;width:41.8px;height:47.2px;background:#fff;border:1.500px solid #f4c04e;border-radius:3px;box-shadow:0 0 0 1.200px #fdeec4;"></div></div>
<div class="abs" style="left:56px;top:160.5px;width:6px;height:1px;background:#999;"></div>
<svg class="abs" style="left:57.5px;top:173px;" width="12" height="12" viewBox="0 0 12 12"><path d="M1.000 4.000l6.000-2.500 2.000 5.000-6.000 2.500z" fill="none" stroke="#b0b8c8" stroke-width=".600"/><rect x="1.500" y="5.000" width="5.500" height="5.500" fill="none" stroke="#b0b8c8" stroke-width=".600"/></svg>
<svg class="abs" style="left:73px;top:169.5px;" width="8" height="12" viewBox="0 0 8 12"><circle cx="4.000" cy="1.500" r="1.200" fill="#111"/><path d="M1.000 3.500l1.500-.500h3.000l1.800-1.500.500.600-1.800 2.000V6.500l-.300 4.500H4.600L4.000 7.500l-.600 3.500H2.500L2.200 6.500V4.500L1.300 6.000.600 5.600z" fill="#111"/></svg>
<div class="abs" style="left:85.5px;top:187px;width:2.5px;height:2.5px;background:#5f6368;border-radius:1px;"></div>
<div class="t" style="left:54.2px;top:204.8px;font-size:6.5px;height:6.5px;line-height:6.5px;color:#2b5aa8;font-weight:700;">P</div>
<div class="abs" style="left:62px;top:214.5px;width:6px;height:0.8px;background:#bbb;"></div>
<div class="abs" style="left:76.5px;top:214.5px;width:5px;height:0.8px;background:#bbb;"></div>
<div class="abs" style="left:56px;top:223px;width:18px;height:10px;background:#8c8c8c;border-radius:50%;"></div>
<div class="abs" style="left:76.5px;top:221px;width:10.5px;height:8px;background:#e5e5e5;border-radius:50%;"></div>
<div class="abs" style="left:70px;top:232px;width:17px;height:9px;background:#d6d6d6;border-radius:50%;"></div>
<div class="abs" style="left:54px;top:233px;width:10px;height:10px;background:#ebebeb;border-radius:50%;"></div>
<div class="abs" style="left:79px;top:224.5px;width:5px;height:1px;background:#b44;"></div>
<div class="abs" style="left:75.5px;top:236px;width:7px;height:1px;background:#557;"></div>
<div class="abs" style="left:55px;top:259.5px;width:28px;height:0.9px;background:#888;"></div>
<div class="abs" style="left:55px;top:270px;width:7px;height:0.8px;background:#aaa;"></div>
<div class="abs" style="left:73.5px;top:265.5px;width:6px;height:6px;background:radial-gradient(circle,#3a9bdc 30%,#2e7d32 90%);border-radius:50%;"></div>
<div class="abs" style="left:55px;top:279.5px;width:27px;height:7.5px;background:linear-gradient(90deg,#2d2d2d,#555 30%,#333 55%,#666 80%,#3a3a3a);"></div>
<div class="abs" style="left:55px;top:288.5px;width:13px;height:4px;background:#6b6b6b;"></div>
<div class="abs" style="left:69px;top:288.5px;width:13px;height:4px;background:#777;"></div>
<div class="abs" style="left:54.5px;top:318px;width:5px;height:1.2px;background:#58a6c9;"></div>
<div class="abs" style="left:54px;top:329.5px;width:4px;height:1.0px;background:#333;"></div>
<div class="abs" style="left:69px;top:318.5px;width:3px;height:3px;background:#ddd;border-radius:50%;"></div>
<div class="abs" style="left:73.5px;top:319px;width:9px;height:0.8px;background:#d4763b;"></div>
<div class="abs" style="left:73.5px;top:321px;width:7px;height:0.7px;background:#aaa;"></div>
<div class="abs" style="left:69.5px;top:333.5px;width:3px;height:3.5px;background:#c0392b;"></div>
<div class="abs" style="left:74px;top:334px;width:8px;height:0.7px;background:#888;"></div>
<div class="abs" style="left:74px;top:336px;width:6px;height:0.7px;background:#aaa;"></div>
<div class="abs" style="left:56px;top:339px;width:5px;height:2.5px;background:#b59a6a;"></div>
<div class="abs" style="left:76px;top:350px;width:11px;height:2.0px;background:#34507a;"></div>
<div class="abs" style="left:54.5px;top:373px;width:20px;height:1.2px;background:#e0873b;"></div>
<div class="abs" style="left:54px;top:385px;width:30px;height:8px;background:linear-gradient(90deg,#d9c9a4,#e8b24a 25%,#ccd6dd 50%,#e8b24a 75%,#e3d8c0);opacity:.750;border-radius:2px;"></div>
<svg class="abs" style="left:70px;top:383px;" width="8" height="9" viewBox="0 0 8 9"><circle cx="3.500" cy="3.500" r="2.600" fill="#dfe9ee" stroke="#3b5a73" stroke-width=".900"/><path d="M5.300 5.500l1.700 2.300" stroke="#3b5a73" stroke-width="1.000"/></svg>
<div class="abs" style="left:57px;top:429.5px;width:7.5px;height:1.0px;background:#555;"></div>
<div class="abs" style="left:57px;top:435.5px;width:9px;height:0.7px;background:#999;"></div>
<div class="abs" style="left:57px;top:440.5px;width:8.5px;height:0.7px;background:#999;"></div>
<div class="abs" style="left:57px;top:446.5px;width:2.6px;height:2.6px;background:#2a3d64;"></div>
<div class="abs" style="left:62.5px;top:447.5px;width:5px;height:0.7px;background:#888;"></div>
<div class="abs" style="left:57px;top:452px;width:2.6px;height:2.6px;border:.600px solid #2a3556;border-radius:.800px;"></div>
<div class="abs" style="left:62.5px;top:453px;width:10px;height:0.7px;background:#888;"></div>
<div class="abs" style="left:97.2px;top:410.6px;width:3.3px;height:51px;background:#c9c9c9;border-radius:1.600px;"></div>
<svg class="abs" style="left:70.3px;top:472.5px;" width="7" height="7" viewBox="0 0 7 7"><rect x="0" y="0" width="2.800" height="2.800" fill="#5f6368"/><rect x="3.600" y="0" width="2.800" height="2.800" fill="#5f6368"/><rect x="0" y="3.600" width="2.800" height="2.800" fill="#5f6368"/><rect x="3.600" y="3.600" width="2.800" height="2.800" fill="#5f6368"/></svg>
<div class="abs" style="left:102.8px;top:154.3px;width:1px;height:284px;background:#f0f0f0;"></div>
<div class="abs" style="left:103.3px;top:438.6px;width:1px;height:48px;background:#dedede;"></div>
<div class="abs" style="left:0px;top:465.2px;width:73.9px;height:15.6px;background:rgba(0,0,0,.520);border-radius:0 2px 2px 0;"></div>
<div class="t" style="left:10.2px;top:469.1px;font-size:8.8px;height:8.8px;line-height:8.8px;color:#f2f2f2;transform:scaleX(0.857);-webkit-text-stroke:.250px #f2f2f2;">Natalia Rozanska</div>
<!-- panel -->
<div class="abs" style="left:810px;top:67px;width:214px;height:482px;background:#2d2c2c;"></div>
<div class="t" style="left:824.3px;top:91.7px;font-size:13.5px;height:13.5px;line-height:13.5px;color:#fff;font-weight:700;transform:scaleX(0.757);">Uczestnicy</div>
<svg class="abs" style="left:972px;top:98px;" width="14" height="6" viewBox="0 0 14 6"><circle cx="2.4" cy="2.600" r="1.150" fill="#e6e6e6"/><circle cx="6.1" cy="2.600" r="1.150" fill="#e6e6e6"/><circle cx="9.8" cy="2.600" r="1.150" fill="#e6e6e6"/></svg>
<svg class="abs" style="left:995px;top:96px;" width="10" height="10" viewBox="0 0 10 10"><path d="M1.300 1.300l6.800 6.800M8.100 1.300l-6.800 6.800" stroke="#d6d6d6" stroke-width="1.000"/></svg>
<div class="abs" style="left:824.3px;top:122.2px;width:157.5px;height:20.8px;background:#3b3a39;border-radius:2px;"></div>
<div class="t" style="left:832.1px;top:127.7px;font-size:10.5px;height:10.5px;line-height:10.5px;color:#c8c6c4;transform:scaleX(0.858);">Wpisz nazwę</div>
<svg class="abs" style="left:993px;top:127px;" width="14" height="11" viewBox="0 0 14 11"><g fill="none" stroke="#c8c8c8" stroke-width=".900">
      <rect x="1.200" y="2.000" width="7.600" height="5.200" rx="2.600"/>
      <rect x="5.000" y="4.000" width="7.600" height="5.200" rx="2.600"/></g></svg>
<svg class="abs" style="left:815.5px;top:169.5px;" width="6" height="4" viewBox="0 0 6 4"><path d="M0.500 0.500h4.600L2.800 3.300z" fill="#9a9a9a"/></svg>
<div class="t" style="left:824.8px;top:161.7px;font-size:9.0px;height:9.0px;line-height:9.0px;color:#fff;transform:scaleX(0.866);">Podczas tego spotkania</div>
<div class="t" style="left:824.8px;top:172.1px;font-size:9.0px;height:9.0px;line-height:9.0px;color:#fff;transform:scaleX(0.781);">(21)</div>
<div class="abs" style="left:920.4px;top:163.4px;width:78.3px;height:15.3px;border:1px solid #595959;border-radius:2px;"></div>
<div class="t" style="left:928.4px;top:166.6px;font-size:9.0px;height:9.0px;line-height:9.0px;color:#fff;font-weight:700;transform:scaleX(0.836);">Wycisz wszystk...</div>
<div class="abs" style="left:1016.0px;top:155.5px;width:4.5px;height:210.5px;background:#5c5c5c;border-radius:2.2px;"></div>
<svg class="abs" style="left:825.00px;top:186.00px" width="21" height="21" viewBox="0 0 30 30"><defs><clipPath id="pc1"><circle cx="15" cy="15" r="15"/></clipPath><filter id="pf1" x="-10%" y="-10%" width="120%" height="120%"><feGaussianBlur stdDeviation="1.03"/></filter></defs><g clip-path="url(#pc1)"><g filter="url(#pf1)"><rect x="-3" y="-3" width="36" height="36" fill="#666"/><g><rect width="30" height="30" fill="#35130f"/>
        <path d="M0 0h30v10H0z" fill="#2a0f0c"/>
        <path d="M3 30c-1-9 3-16 10-18l6-1c6 1 10 8 9 19z" fill="#a8301f"/>
        <path d="M8 18c4-3 12-3 16 1l-3 6H10z" fill="#c23b26"/>
        <circle cx="17" cy="8" r="3.600" fill="#c98f6c"/>
        <path d="M13 5c2-3 7-3 8 1l-1 1c-2-2-5-2-7 0z" fill="#5a2a1c"/>
        <path d="M7 21c3-1 8 0 10 2l-1 2c-3-1-7-1-9-1z" fill="#d3a681"/></g></g></g></svg>
<svg class="abs" style="left:837.8px;top:198.8px;" width="10" height="10" viewBox="0 0 10 10"><circle cx="5" cy="5" r="4.7" fill="#2d2c2c"/><circle cx="5" cy="5" r="3.1" fill="#c4314b"/></svg>
<div class="t" style="left:851.3px;top:186.7px;font-size:10.3px;height:10.3px;line-height:10.3px;color:#fff;transform:scaleX(0.861);-webkit-text-stroke:.120px #fff;">Ewa Gobis</div>
<div class="t" style="left:851.3px;top:197.5px;font-size:9.0px;height:9.0px;line-height:9.0px;color:#adadad;transform:scaleX(0.891);">Organizator</div>
<svg class="abs" style="left:988.3px;top:191.0px;" width="11" height="11" viewBox="0 0 11 11">
      <rect x="3.700" y="0.900" width="3.500" height="5.800" rx="1.750" fill="none" stroke="#d8d8d8" stroke-width=".800"/>
      <path d="M2.000 5.200c0 4.600 6.900 4.600 6.900 0M5.450 8.700v1.700" fill="none" stroke="#d8d8d8" stroke-width=".800"/>
      <path d="M0.300 10.300L10.500 0.500" stroke="#2d2c2c" stroke-width="2.000"/>
      <path d="M0.300 10.300L10.500 0.500" stroke="#d8d8d8" stroke-width=".800"/></svg>
<div class="abs" style="left:825.0px;top:219.3px;width:21px;height:21px;border-radius:50%;background:#d5e6ef;"></div><div class="t" style="left:829.3px;top:225.8px;font-size:8.5px;height:8.5px;line-height:8.5px;color:#3c6a86;transform:scaleX(0.920);">AW</div>
<svg class="abs" style="left:837.8px;top:232.10000000000002px;" width="10" height="10" viewBox="0 0 10 10"><circle cx="5" cy="5" r="4.7" fill="#2d2c2c"/><circle cx="5" cy="5" r="3.1" fill="#c4314b"/></svg>
<div class="t" style="left:851.3px;top:224.8px;font-size:10.3px;height:10.3px;line-height:10.3px;color:#fff;transform:scaleX(0.889);-webkit-text-stroke:.120px #fff;">Agata Wolańczyk</div>
<svg class="abs" style="left:988.3px;top:224.3px;" width="11" height="11" viewBox="0 0 11 11">
      <rect x="3.700" y="0.900" width="3.500" height="5.800" rx="1.750" fill="none" stroke="#d8d8d8" stroke-width=".800"/>
      <path d="M2.000 5.200c0 4.600 6.900 4.600 6.900 0M5.450 8.700v1.700" fill="none" stroke="#d8d8d8" stroke-width=".800"/>
      <path d="M0.300 10.300L10.500 0.500" stroke="#2d2c2c" stroke-width="2.000"/>
      <path d="M0.300 10.300L10.500 0.500" stroke="#d8d8d8" stroke-width=".800"/></svg>
<div class="abs" style="left:825.0px;top:252.7px;width:21px;height:21px;border-radius:50%;background:#f6c9da;"></div><div class="t" style="left:830.3px;top:259.1px;font-size:8.5px;height:8.5px;line-height:8.5px;color:#8b2252;transform:scaleX(0.920);">AB</div>
<svg class="abs" style="left:837.8px;top:265.5px;" width="10" height="10" viewBox="0 0 10 10"><circle cx="5" cy="5" r="4.7" fill="#2d2c2c"/><circle cx="5" cy="5" r="3.1" fill="#c4314b"/></svg>
<div class="t" style="left:851.3px;top:258.2px;font-size:10.3px;height:10.3px;line-height:10.3px;color:#fff;transform:scaleX(0.866);-webkit-text-stroke:.120px #fff;">Agnieszka Świątek Brzezińska</div>
<svg class="abs" style="left:988.3px;top:257.7px;" width="11" height="11" viewBox="0 0 11 11">
      <rect x="3.700" y="0.900" width="3.500" height="5.800" rx="1.750" fill="none" stroke="#d8d8d8" stroke-width=".800"/>
      <path d="M2.000 5.200c0 4.600 6.900 4.600 6.900 0M5.450 8.700v1.700" fill="none" stroke="#d8d8d8" stroke-width=".800"/>
      <path d="M0.300 10.300L10.500 0.500" stroke="#2d2c2c" stroke-width="2.000"/>
      <path d="M0.300 10.300L10.500 0.500" stroke="#d8d8d8" stroke-width=".800"/></svg>
<svg class="abs" style="left:825.00px;top:286.00px" width="21" height="21" viewBox="0 0 30 30"><defs><clipPath id="pc2"><circle cx="15" cy="15" r="15"/></clipPath><filter id="pf2" x="-10%" y="-10%" width="120%" height="120%"><feGaussianBlur stdDeviation="1.03"/></filter></defs><g clip-path="url(#pc2)"><g filter="url(#pf2)"><rect x="-3" y="-3" width="36" height="36" fill="#666"/><g><rect width="30" height="30" fill="#f2f0e8"/>
        <path d="M8 10l12 6-12 6z" fill="#e9a53c"/><path d="M8 10l5 6-5 6z" fill="#f3cf7a"/>
        <path d="M6 9c1-1 2-1 3 0M20 22l3 1" stroke="#d8d4c4" stroke-width="1"/></g></g></g></svg>
<svg class="abs" style="left:837.8px;top:298.8px;" width="10" height="10" viewBox="0 0 10 10"><circle cx="5" cy="5" r="4.7" fill="#2d2c2c"/><circle cx="5" cy="5" r="3.1" fill="#c4314b"/></svg>
<div class="t" style="left:851.3px;top:291.6px;font-size:10.3px;height:10.3px;line-height:10.3px;color:#fff;transform:scaleX(0.856);-webkit-text-stroke:.120px #fff;">Aleksandra Trzaska</div>
<svg class="abs" style="left:988.3px;top:291.0px;" width="11" height="11" viewBox="0 0 11 11">
      <rect x="3.700" y="0.900" width="3.500" height="5.800" rx="1.750" fill="none" stroke="#d8d8d8" stroke-width=".800"/>
      <path d="M2.000 5.200c0 4.600 6.900 4.600 6.900 0M5.450 8.700v1.700" fill="none" stroke="#d8d8d8" stroke-width=".800"/>
      <path d="M0.300 10.300L10.500 0.500" stroke="#2d2c2c" stroke-width="2.000"/>
      <path d="M0.300 10.300L10.500 0.500" stroke="#d8d8d8" stroke-width=".800"/></svg>
<svg class="abs" style="left:825.00px;top:319.30px" width="21" height="21" viewBox="0 0 30 30"><defs><clipPath id="pc3"><circle cx="15" cy="15" r="15"/></clipPath><filter id="pf3" x="-10%" y="-10%" width="120%" height="120%"><feGaussianBlur stdDeviation="1.03"/></filter></defs><g clip-path="url(#pc3)"><g filter="url(#pf3)"><rect x="-3" y="-3" width="36" height="36" fill="#666"/><g><rect width="30" height="30" fill="#54432c"/>
        <path d="M0 0h30v14H0z" fill="#7b6638"/>
        <path d="M6 16c0-8 5-13 11-12 6 1 9 7 7 13-2 6-8 9-13 7-3-1-5-4-5-8z" fill="#f0d27a"/>
        <path d="M10 10c3-4 9-3 11 1s0 9-4 10c-5 1-9-5-7-11z" fill="#f7e6a6"/>
        <path d="M9 22c2-2 6-2 8 0l-1 5h-6z" fill="#d98b2a"/>
        <path d="M20 20c3 0 6 2 7 6l-4 4h-5z" fill="#3b3026"/></g></g></g></svg>
<svg class="abs" style="left:837.8px;top:332.1px;" width="10" height="10" viewBox="0 0 10 10"><circle cx="5" cy="5" r="4.7" fill="#2d2c2c"/><circle cx="5" cy="5" r="3.1" fill="#c4314b"/></svg>
<div class="t" style="left:851.3px;top:324.9px;font-size:10.3px;height:10.3px;line-height:10.3px;color:#fff;transform:scaleX(0.855);-webkit-text-stroke:.120px #fff;">Elżbieta Fryca</div>
<svg class="abs" style="left:988.3px;top:324.3px;" width="11" height="11" viewBox="0 0 11 11">
      <rect x="3.700" y="0.900" width="3.500" height="5.800" rx="1.750" fill="none" stroke="#d8d8d8" stroke-width=".800"/>
      <path d="M2.000 5.200c0 4.600 6.900 4.600 6.900 0M5.450 8.700v1.700" fill="none" stroke="#d8d8d8" stroke-width=".800"/>
      <path d="M0.300 10.300L10.500 0.500" stroke="#2d2c2c" stroke-width="2.000"/>
      <path d="M0.300 10.300L10.500 0.500" stroke="#d8d8d8" stroke-width=".800"/></svg>
<div class="abs" style="left:825.0px;top:352.6px;width:21px;height:21px;border-radius:50%;background:#cfdfe8;"></div><div class="t" style="left:830.9px;top:359.1px;font-size:8.5px;height:8.5px;line-height:8.5px;color:#2f5f78;transform:scaleX(0.920);">JS</div>
<svg class="abs" style="left:837.8px;top:365.40000000000003px;" width="10" height="10" viewBox="0 0 10 10"><circle cx="5" cy="5" r="4.7" fill="#2d2c2c"/><circle cx="5" cy="5" r="3.1" fill="#f0b429"/><path d="M5 3.300v1.900l1.200.7" stroke="#fff" stroke-width=".700" fill="none"/></svg>
<div class="t" style="left:851.3px;top:358.2px;font-size:10.3px;height:10.3px;line-height:10.3px;color:#fff;transform:scaleX(0.861);-webkit-text-stroke:.120px #fff;">Julia Sigorska</div>
<svg class="abs" style="left:988.3px;top:357.6px;" width="11" height="11" viewBox="0 0 11 11">
      <rect x="3.700" y="0.900" width="3.500" height="5.800" rx="1.750" fill="none" stroke="#d8d8d8" stroke-width=".800"/>
      <path d="M2.000 5.200c0 4.600 6.900 4.600 6.900 0M5.450 8.700v1.700" fill="none" stroke="#d8d8d8" stroke-width=".800"/>
      <path d="M0.300 10.300L10.500 0.500" stroke="#2d2c2c" stroke-width="2.000"/>
      <path d="M0.300 10.300L10.500 0.500" stroke="#d8d8d8" stroke-width=".800"/></svg>
<div class="abs" style="left:825.0px;top:385.9px;width:21px;height:21px;border-radius:50%;background:#f8d3d0;"></div><div class="t" style="left:829.9px;top:392.3px;font-size:8.5px;height:8.5px;line-height:8.5px;color:#a33a3a;transform:scaleX(0.920);">JW</div>
<svg class="abs" style="left:837.8px;top:398.7px;" width="10" height="10" viewBox="0 0 10 10"><circle cx="5" cy="5" r="4.7" fill="#2d2c2c"/><circle cx="5" cy="5" r="3.1" fill="#c4314b"/></svg>
<div class="t" style="left:851.3px;top:391.4px;font-size:10.3px;height:10.3px;line-height:10.3px;color:#fff;transform:scaleX(0.875);-webkit-text-stroke:.120px #fff;">Julia Woryna</div>
<svg class="abs" style="left:988.3px;top:390.9px;" width="11" height="11" viewBox="0 0 11 11">
      <rect x="3.700" y="0.900" width="3.500" height="5.800" rx="1.750" fill="none" stroke="#d8d8d8" stroke-width=".800"/>
      <path d="M2.000 5.200c0 4.600 6.900 4.600 6.900 0M5.450 8.700v1.700" fill="none" stroke="#d8d8d8" stroke-width=".800"/>
      <path d="M0.300 10.300L10.500 0.500" stroke="#2d2c2c" stroke-width="2.000"/>
      <path d="M0.300 10.300L10.500 0.500" stroke="#d8d8d8" stroke-width=".800"/></svg>
<div class="abs" style="left:825.0px;top:419.2px;width:21px;height:21px;border-radius:50%;background:#f8d3d0;"></div><div class="t" style="left:830.9px;top:425.6px;font-size:8.5px;height:8.5px;line-height:8.5px;color:#a33a3a;transform:scaleX(0.920);">JB</div>
<svg class="abs" style="left:837.8px;top:432.0px;" width="10" height="10" viewBox="0 0 10 10"><circle cx="5" cy="5" r="4.7" fill="#2d2c2c"/><circle cx="5" cy="5" r="3.1" fill="#c4314b"/></svg>
<div class="t" style="left:851.3px;top:424.8px;font-size:10.3px;height:10.3px;line-height:10.3px;color:#fff;transform:scaleX(0.861);-webkit-text-stroke:.120px #fff;">Justyna Baboszyn</div>
<svg class="abs" style="left:988.3px;top:424.2px;" width="11" height="11" viewBox="0 0 11 11">
      <rect x="3.700" y="0.900" width="3.500" height="5.800" rx="1.750" fill="none" stroke="#d8d8d8" stroke-width=".800"/>
      <path d="M2.000 5.200c0 4.600 6.900 4.600 6.900 0M5.450 8.700v1.700" fill="none" stroke="#d8d8d8" stroke-width=".800"/>
      <path d="M0.300 10.300L10.500 0.500" stroke="#2d2c2c" stroke-width="2.000"/>
      <path d="M0.300 10.300L10.500 0.500" stroke="#d8d8d8" stroke-width=".800"/></svg>
<svg class="abs" style="left:825.00px;top:452.50px" width="21" height="21" viewBox="0 0 30 30"><defs><clipPath id="pc4"><circle cx="15" cy="15" r="15"/></clipPath><filter id="pf4" x="-10%" y="-10%" width="120%" height="120%"><feGaussianBlur stdDeviation="1.03"/></filter></defs><g clip-path="url(#pc4)"><g filter="url(#pf4)"><rect x="-3" y="-3" width="36" height="36" fill="#666"/><g><rect width="30" height="30" fill="#f3f1ef"/>
        <path d="M0 0h20c3 6 2 14-1 20L14 30H0z" fill="#5a463a"/>
        <path d="M10 6c2-4 9-4 11 1 1 4 0 9-2 12-2 3-6 3-8 0-2-4-2-9-1-13z" fill="#d3aa92"/>
        <path d="M19 4c4 3 5 12 3 20l-3 6h-3l3-10c1-6 1-12 0-16z" fill="#8a7358"/>
        <path d="M0 13c3-2 7-2 9 1l2 9-3 7H0z" fill="#e9e4de"/>
        <path d="M7 12c2-2 5-1 5 2l-1 7c-1 2-4 2-5 0z" fill="#2f2a28"/>
        <path d="M10 22h12v8H10z" fill="#4a4f63"/></g></g></g></svg>
<svg class="abs" style="left:837.8px;top:465.3px;" width="10" height="10" viewBox="0 0 10 10"><circle cx="5" cy="5" r="4.7" fill="#2d2c2c"/><circle cx="5" cy="5" r="3.1" fill="#c4314b"/></svg>
<div class="t" style="left:851.3px;top:458.1px;font-size:10.3px;height:10.3px;line-height:10.3px;color:#fff;transform:scaleX(0.875);-webkit-text-stroke:.120px #fff;">Mila Bernacka</div>
<svg class="abs" style="left:988.3px;top:457.5px;" width="11" height="11" viewBox="0 0 11 11">
      <rect x="3.700" y="0.900" width="3.500" height="5.800" rx="1.750" fill="none" stroke="#d8d8d8" stroke-width=".800"/>
      <path d="M2.000 5.200c0 4.600 6.900 4.600 6.900 0M5.450 8.700v1.700" fill="none" stroke="#d8d8d8" stroke-width=".800"/>
      <path d="M0.300 10.300L10.500 0.500" stroke="#2d2c2c" stroke-width="2.000"/>
      <path d="M0.300 10.300L10.500 0.500" stroke="#d8d8d8" stroke-width=".800"/></svg>
<div class="abs" style="left:825.0px;top:485.8px;width:21px;height:21px;border-radius:50%;background:#cfdcee;"></div><div class="t" style="left:829.6px;top:492.2px;font-size:8.5px;height:8.5px;line-height:8.5px;color:#2b4f7c;transform:scaleX(0.920);">NG</div>
<svg class="abs" style="left:837.8px;top:498.6px;" width="10" height="10" viewBox="0 0 10 10"><circle cx="5" cy="5" r="4.7" fill="#2d2c2c"/><circle cx="5" cy="5" r="3.1" fill="#c4314b"/></svg>
<div class="t" style="left:851.3px;top:491.4px;font-size:10.3px;height:10.3px;line-height:10.3px;color:#fff;transform:scaleX(0.878);-webkit-text-stroke:.120px #fff;">Natalia Grabarska</div>
<svg class="abs" style="left:988.3px;top:490.8px;" width="11" height="11" viewBox="0 0 11 11">
      <rect x="3.700" y="0.900" width="3.500" height="5.800" rx="1.750" fill="none" stroke="#d8d8d8" stroke-width=".800"/>
      <path d="M2.000 5.200c0 4.600 6.900 4.600 6.900 0M5.450 8.700v1.700" fill="none" stroke="#d8d8d8" stroke-width=".800"/>
      <path d="M0.300 10.300L10.500 0.500" stroke="#2d2c2c" stroke-width="2.000"/>
      <path d="M0.300 10.300L10.500 0.500" stroke="#d8d8d8" stroke-width=".800"/></svg>
<div class="abs" style="left:822.6px;top:517.3000000000001px;width:25.8px;height:25.8px;border-radius:50%;border:1.600px solid #a6a7dc;"></div>
<div class="abs" style="left:825.5px;top:520.2px;width:20px;height:20px;border-radius:50%;background:#f3cfd6;"></div><div class="t" style="left:829.9px;top:526.2px;font-size:8.5px;height:8.5px;line-height:8.5px;color:#8e2f45;transform:scaleX(0.920);">NR</div>
<svg class="abs" style="left:837.8px;top:532.5px;" width="10" height="10" viewBox="0 0 10 10"><circle cx="5" cy="5" r="4.7" fill="#2d2c2c"/><circle cx="5" cy="5" r="3.1" fill="#c4314b"/><path d="M3.400 5h3.200" stroke="#fff" stroke-width="1.000"/></svg>
<div class="t" style="left:851.3px;top:519.4px;font-size:10.5px;height:10.5px;line-height:10.5px;color:#fff;font-weight:700;transform:scaleX(0.838);">Natalia Rozanska</div>
<div class="t" style="left:851.3px;top:530.5px;font-size:9.0px;height:9.0px;line-height:9.0px;color:#adadad;transform:scaleX(0.857);">Spoza organizacji</div>
<svg class="abs" style="left:989px;top:524px;" width="10" height="12" viewBox="0 0 10 12"><rect x="3.000" y="0.500" width="3.600" height="6.400" rx="1.800" fill="#e6e6e6"/>
      <path d="M1.400 5.400c0 4.300 6.800 4.300 6.800 0M4.800 8.800v1.900" fill="none" stroke="#e6e6e6" stroke-width=".900"/></svg>
<!-- strip -->
<div class="abs" style="left:0px;top:486.4px;width:810px;height:62.6px;background:#1f1f1f;"></div>
<div class="abs" style="left:55.89999999999999px;top:503.59999999999997px;width:28.4px;height:28.4px;border-radius:50%;background:#6264a7;"></div>
<div class="t" style="left:62.0px;top:513.2px;font-size:9.5px;height:9.5px;line-height:9.5px;color:#fff;font-weight:700;transform:scaleX(1.005);">+14</div>
<svg class="abs" style="left:111.15px;top:502.95px" width="29.7" height="29.7" viewBox="0 0 30 30"><defs><clipPath id="pc5"><circle cx="15" cy="15" r="15"/></clipPath><filter id="pf5" x="-10%" y="-10%" width="120%" height="120%"><feGaussianBlur stdDeviation="0.97"/></filter></defs><g clip-path="url(#pc5)"><g filter="url(#pf5)"><rect x="-3" y="-3" width="36" height="36" fill="#666"/><g><rect width="30" height="30" fill="#f3f1ef"/>
        <path d="M0 0h20c3 6 2 14-1 20L14 30H0z" fill="#5a463a"/>
        <path d="M10 6c2-4 9-4 11 1 1 4 0 9-2 12-2 3-6 3-8 0-2-4-2-9-1-13z" fill="#d3aa92"/>
        <path d="M19 4c4 3 5 12 3 20l-3 6h-3l3-10c1-6 1-12 0-16z" fill="#8a7358"/>
        <path d="M0 13c3-2 7-2 9 1l2 9-3 7H0z" fill="#e9e4de"/>
        <path d="M7 12c2-2 5-1 5 2l-1 7c-1 2-4 2-5 0z" fill="#2f2a28"/>
        <path d="M10 22h12v8H10z" fill="#4a4f63"/></g></g></g></svg>
<div class="abs" style="left:167.15px;top:502.94999999999993px;width:29.7px;height:29.7px;border-radius:50%;background:#f7d2cd;"></div>
<div class="t" style="left:176.0px;top:512.5px;font-size:11.5px;height:11.5px;line-height:11.5px;color:#a5423a;transform:scaleX(0.909);">JB</div>
<svg class="abs" style="left:210px;top:486.5px" width="120" height="62.5" viewBox="0 0 120 62.5">
      <defs><filter id="vb" x="-5%" y="-5%" width="110%" height="110%"><feGaussianBlur stdDeviation="0.9"/></filter>
      <clipPath id="vc"><rect x="0" y="0" width="120" height="62.5"/></clipPath></defs>
      <g clip-path="url(#vc)"><g filter="url(#vb)">
      <rect x="-3" y="-3" width="126" height="70" fill="#6f5e58"/>
      <rect x="20" y="-3" width="7" height="50" fill="#b3a696"/>
      <rect x="27" y="-3" width="35" height="70" fill="#6f5e58"/>
      <rect x="61" y="-3" width="3.500" height="50" fill="#4f3f3a"/>
      <rect x="64" y="-3" width="21" height="49" fill="#cbb8e4"/>
      <rect x="64" y="19" width="21" height="1.200" fill="#a999c4"/>
      <rect x="64" y="24" width="21" height="22" fill="#b9a8d8"/>
      <path d="M69 38l2-6 2 3 2-6 2 5 3-5 1 6 2 3z" fill="#5c5590"/>
      <rect x="113" y="-3" width="10" height="50" fill="#85708a"/>
      <rect x="35" y="2" width="19" height="13.500" fill="#8f8b8c"/><rect x="37" y="4" width="7" height="9" fill="#c9c6c6"/><rect x="46" y="5" width="6" height="8" fill="#55504f"/>
      <rect x="35.500" y="20" width="18.500" height="13" fill="#5d6278"/><rect x="37" y="22" width="7" height="9" fill="#3f63a0"/><rect x="46" y="22" width="6" height="9" fill="#a04a4a"/>
      <circle cx="21.500" cy="10.500" r="4" fill="#c8c4c0"/>
      <!-- left woman -->
      <path d="M-3 -3h17c6 2 8 10 8 22l1 30H-3z" fill="#b48e60"/>
      <path d="M-3 8h11c4 4 6 10 5 17-1 6-5 10-10 10H-3z" fill="#cfa58e"/>
      <path d="M-3 38c8-2 18 0 23 6l5 20H-3z" fill="#e6e0da"/>
      <path d="M6 36c3-2 6-1 7 2l-1 12-6 2z" fill="#d8a898"/>
      <!-- right woman -->
      <path d="M78 30C76 10 82-3 96-3c14 0 19 10 18 28 0 10 1 16-2 24H84c-4-6-5-12-6-19z" fill="#4c362e"/>
      <path d="M82 20c0-10 5-16 12-16s12 6 12 16c0 10-5 19-12 19s-12-9-12-19z" fill="#c79c86"/>
      <path d="M88 36h12v8H88z" fill="#b98d78"/>
      <path d="M54 66c2-14 10-22 24-25l10-2 6 8 8-8 8 3c8 2 12 6 14 12v14z" fill="#ece8e5"/>
      <path d="M103 24c4 0 8 6 7 16l-4 8-5-6z" fill="#4c362e"/>
      <path d="M88 24.500h3M97 24.500h3" stroke="#5a3f35" stroke-width="1"/><path d="M91 32.500c2 1.500 4 1.500 6 0" stroke="#9a5f55" stroke-width="1" fill="none"/>
      </g></g></svg>
<div class="t" style="left:220.9px;top:536.9px;font-size:9.0px;height:9.0px;line-height:9.0px;color:#fff;transform:scaleX(0.818);text-shadow:0 0 1.500px rgba(0,0,0,.9),0 0 1px rgba(0,0,0,.7);-webkit-text-stroke:.200px #fff;">Natalia Rozanska</div>
<div class="abs" style="left:330px;top:486.4px;width:120.2px;height:62.6px;background:#3d3d3d;"></div>
<div class="abs" style="left:450.2px;top:486.4px;width:119.8px;height:62.6px;background:#383838;"></div>
<div class="abs" style="left:570px;top:486.4px;width:120px;height:62.6px;background:#383838;border-left:1px solid #353535;"></div>
<div class="abs" style="left:690px;top:486.4px;width:120.3px;height:62.6px;background:#464646;"></div>
<div class="abs" style="left:375.2px;top:503.1px;width:30px;height:30px;border-radius:50%;background:#d0deee;"></div>
<div class="t" style="left:381.6px;top:512.6px;font-size:11.5px;height:11.5px;line-height:11.5px;color:#23426b;transform:scaleX(0.986);-webkit-text-stroke:.3px #23426b;">NG</div>
<div class="t" style="left:340.2px;top:536.5px;font-size:9.0px;height:9.0px;line-height:9.0px;color:#fff;transform:scaleX(0.858);-webkit-text-stroke:.200px #fff;">Natalia Grabarska</div>
<svg class="abs" style="left:408.6px;top:537.0px;" width="8" height="8" viewBox="0 0 8 8">
      <rect x="2.700" y="0.600" width="2.600" height="4.200" rx="1.300" fill="#cfcfcf" stroke="#d8d8d8" stroke-width=".500"/>
      <path d="M1.500 3.800c0 3.300 5.000 3.300 5.000 0M4.000 6.300v1.200" fill="none" stroke="#d8d8d8" stroke-width=".700"/>
      <path d="M0.400 7.500L7.600 0.500" stroke="#3d3d3d" stroke-width="1.700"/>
      <path d="M0.400 7.500L7.600 0.500" stroke="#d8d8d8" stroke-width=".700"/></svg>
<svg class="abs" style="left:495.40px;top:503.40px" width="29.2" height="29.2" viewBox="0 0 30 30"><defs><clipPath id="pc6"><circle cx="15" cy="15" r="15"/></clipPath><filter id="pf6" x="-10%" y="-10%" width="120%" height="120%"><feGaussianBlur stdDeviation="0.99"/></filter></defs><g clip-path="url(#pc6)"><g filter="url(#pf6)"><rect x="-3" y="-3" width="36" height="36" fill="#666"/><g><rect width="30" height="30" fill="#8377bd"/>
        <path d="M0 0h30v12H0z" fill="#9a8fd0"/>
        <path d="M0 18h8v12H0z" fill="#55507f"/><path d="M23 16h7v14h-7z" fill="#6a63a0"/>
        <path d="M6 30c0-10 3-17 9-17s9 7 9 17z" fill="#d8c79f"/>
        <path d="M9 22c2-2 10-2 12 0l-1 5c-3 2-7 2-10 0z" fill="#c7a98c"/>
        <circle cx="11.5" cy="18" r="1.200" fill="#2c2420"/><circle cx="18.500" cy="18" r="1.200" fill="#2c2420"/>
        <path d="M11 24.500h8" stroke="#8e5f55" stroke-width="1.200"/></g></g></g></svg>
<div class="t" style="left:460.3px;top:536.5px;font-size:9.0px;height:9.0px;line-height:9.0px;color:#fff;transform:scaleX(0.844);-webkit-text-stroke:.200px #fff;">Szymon Reutt</div>
<svg class="abs" style="left:515.6px;top:537.0px;" width="8" height="8" viewBox="0 0 8 8">
      <rect x="2.700" y="0.600" width="2.600" height="4.200" rx="1.300" fill="#cfcfcf" stroke="#d8d8d8" stroke-width=".500"/>
      <path d="M1.500 3.800c0 3.300 5.000 3.300 5.000 0M4.000 6.300v1.200" fill="none" stroke="#d8d8d8" stroke-width=".700"/>
      <path d="M0.400 7.500L7.600 0.500" stroke="#383838" stroke-width="1.700"/>
      <path d="M0.400 7.500L7.600 0.500" stroke="#d8d8d8" stroke-width=".700"/></svg>
<svg class="abs" style="left:615.75px;top:503.25px" width="29.5" height="29.5" viewBox="0 0 30 30"><defs><clipPath id="pc7"><circle cx="15" cy="15" r="15"/></clipPath><filter id="pf7" x="-10%" y="-10%" width="120%" height="120%"><feGaussianBlur stdDeviation="0.98"/></filter></defs><g clip-path="url(#pc7)"><g filter="url(#pf7)"><rect x="-3" y="-3" width="36" height="36" fill="#666"/><g><rect width="30" height="30" fill="#8f8780"/>
        <path d="M0 0h12v30H0z" fill="#5d5651"/><path d="M22 0h8v30h-8z" fill="#b0aaa4"/>
        <path d="M8 6c4-5 13-4 16 2 2 5 1 12-2 17l-4 5H9C6 22 5 12 8 6z" fill="#a8582a"/>
        <path d="M8 10c2-3 6-2 7 1l-1 9c-2 3-5 3-6 0z" fill="#2b1b15"/>
        <path d="M15 8c3-2 7 0 7 4l-3 5z" fill="#c97d45"/>
        <path d="M9 24c3-2 9-2 12 1l-2 5H10z" fill="#e3d9cc"/></g></g></g></svg>
<div class="t" style="left:580.2px;top:536.5px;font-size:9.0px;height:9.0px;line-height:9.0px;color:#fff;transform:scaleX(0.850);-webkit-text-stroke:.200px #fff;">Zuzanna Fiedorczuk</div>
<svg class="abs" style="left:656.2px;top:537.0px;" width="8" height="8" viewBox="0 0 8 8">
      <rect x="2.700" y="0.600" width="2.600" height="4.200" rx="1.300" fill="#cfcfcf" stroke="#d8d8d8" stroke-width=".500"/>
      <path d="M1.500 3.800c0 3.300 5.000 3.300 5.000 0M4.000 6.300v1.200" fill="none" stroke="#d8d8d8" stroke-width=".700"/>
      <path d="M0.400 7.500L7.600 0.500" stroke="#383838" stroke-width="1.700"/>
      <path d="M0.400 7.500L7.600 0.500" stroke="#d8d8d8" stroke-width=".700"/></svg>
<svg class="abs" style="left:731.50px;top:498.20px" width="38" height="38" viewBox="0 0 30 30"><defs><clipPath id="pc8"><circle cx="15" cy="15" r="15"/></clipPath><filter id="pf8" x="-10%" y="-10%" width="120%" height="120%"><feGaussianBlur stdDeviation="0.88"/></filter></defs><g clip-path="url(#pc8)"><g filter="url(#pf8)"><rect x="-3" y="-3" width="36" height="36" fill="#666"/><g><rect width="30" height="30" fill="#35130f"/>
        <path d="M0 0h30v10H0z" fill="#2a0f0c"/>
        <path d="M3 30c-1-9 3-16 10-18l6-1c6 1 10 8 9 19z" fill="#a8301f"/>
        <path d="M8 18c4-3 12-3 16 1l-3 6H10z" fill="#c23b26"/>
        <circle cx="17" cy="8" r="3.600" fill="#c98f6c"/>
        <path d="M13 5c2-3 7-3 8 1l-1 1c-2-2-5-2-7 0z" fill="#5a2a1c"/>
        <path d="M7 21c3-1 8 0 10 2l-1 2c-3-1-7-1-9-1z" fill="#d3a681"/></g></g></g></svg>
<!-- taskbar -->
<div class="abs" style="left:0px;top:549px;width:1024px;height:27px;background:#d2e2ee;"></div>
<div class="abs" style="left:0px;top:549px;width:33px;height:27px;background:#cbe3f0;"></div>
<svg class="abs" style="left:10.7px;top:558.2px;" width="11" height="10" viewBox="0 0 11 10"><path d="M0 1.400l4.600-.600v3.900H0zM5.200 .700L11 0v4.700H5.200zM0 5.300h4.600v3.900L0 8.600zM5.200 5.300H11V10l-5.800-.700z" fill="#111"/></svg>
<div class="abs" style="left:33px;top:549px;width:228px;height:27px;background:#fff;border:1px solid #c9d3da;border-bottom:none;"></div>
<svg class="abs" style="left:39.5px;top:556.5px;" width="13" height="12" viewBox="0 0 13 12"><circle cx="7.800" cy="4.600" r="3.400" fill="none" stroke="#333" stroke-width="1.000"/><path d="M5.300 7.000L1.000 11.000" stroke="#333" stroke-width="1.000"/></svg>
<div class="t" style="left:58.9px;top:557.5px;font-size:11.0px;height:11.0px;line-height:11.0px;color:#4a4a4a;transform:scaleX(0.904);">Wpisz tu wyszukiwane słowa</div>
<svg class="abs" style="left:271px;top:556px;" width="13" height="13" viewBox="0 0 13 13"><circle cx="6.400" cy="6.500" r="4.500" fill="none" stroke="#111" stroke-width="1.500"/></svg>
<svg class="abs" style="left:303px;top:556.5px;" width="13" height="12" viewBox="0 0 13 12"><path d="M3.000 0.600v10.800M9.700 0.600v10.800M3.000 3.300h6.700M3.000 8.700h6.700M0.600 2.000v2.000M0.600 8.000v2.000M12.300 2.000v2.000M12.300 8.000v2.000" stroke="#111" stroke-width="1.000" fill="none"/></svg>
<svg class="abs" style="left:335.3px;top:555.7px;" width="17" height="15" viewBox="0 0 17 15"><defs><linearGradient id="eg" x1="0" y1="0" x2="1" y2="1"><stop offset="0" stop-color="#35c1a5"/><stop offset=".45" stop-color="#1f9bd8"/><stop offset="1" stop-color="#0c59a4"/></linearGradient></defs>
      <circle cx="8.300" cy="7.400" r="7.000" fill="url(#eg)"/>
      <path d="M4.800 8.400c0-2.300 2.000-3.700 4.200-3.700 2.200 0 3.700 1.300 3.700 2.700 0 1.200-1.000 1.900-2.200 1.900-.9 0-1.500-.4-1.500-1.000 0-.4.300-.6.300-1.000 0-.5-.500-.9-1.200-.9-1.300 0-2.200 1.300-2.200 2.800 0 2.300 1.900 3.800 4.300 3.800 1.200 0 2.200-.300 3.000-.800-1.200 1.500-2.900 2.300-4.800 2.300-2.300 0-3.600-2.900-3.600-6.100z" fill="#fff" opacity=".92"/></svg>
<svg class="abs" style="left:368.9px;top:556px;" width="16" height="13" viewBox="0 0 16 13"><path d="M0.300 1.500c0-.5.300-.8.800-.8h4.600l1.300 1.500h7.400c.5 0 .8.300.8.800v1.000H0.300z" fill="#e8a824"/>
      <rect x="0.300" y="3.200" width="14.900" height="9.000" rx=".600" fill="#fbd25a"/>
      <rect x="3.500" y="7.000" width="8.500" height="5.200" fill="#3e8fe0"/><rect x="5.300" y="9.000" width="4.900" height="3.200" fill="#fbd25a"/></svg>
<div class="abs" style="left:362.5px;top:574px;width:28px;height:2px;background:#3b88d6;"></div>
<svg class="abs" style="left:401.9px;top:555.7px;" width="20" height="16" viewBox="0 0 20 16"><path d="M0.500 5.000L8.300 0.500l7.800 4.500v8.300H0.500z" fill="#1d79c9"/>
      <path d="M0.500 5.200l7.800 4.800 7.800-4.800v8.100H0.500z" fill="#3ea0e8"/><path d="M0.500 13.300l7.800-5.700 7.800 5.700z" fill="#1b6fbf"/>
      <circle cx="15.200" cy="12.000" r="4.000" fill="#e9eef2" stroke="#555" stroke-width=".800"/></svg>
<div class="t" style="left:415.3px;top:564.4px;font-size:7.0px;height:7.0px;line-height:7.0px;color:#222;font-weight:700;">4</div>
<svg class="abs" style="left:436px;top:555px;" width="14" height="16" viewBox="0 0 14 16"><path d="M1.000 3.800L8.800 0.700l4.000 1.200v12.000l-4.000 1.300-7.800-3.000 7.300 .900V3.300L4.000 4.600v6.600l-3.000 1.000z" fill="#e4462b"/></svg>
<div class="abs" style="left:430px;top:574px;width:26.5px;height:2px;background:#3b88d6;"></div>
<svg class="abs" style="left:468.4px;top:555px;" width="14" height="16" viewBox="0 0 14 16"><path d="M0.800 0.800h8.600l3.600 3.600v10.600H0.800z" fill="#fff" stroke="#1c84c6" stroke-width="1.300"/>
      <path d="M9.400 0.800v3.600h3.600" fill="#b6dcf2" stroke="#1c84c6" stroke-width=".900"/>
      <rect x="3.000" y="6.000" width="4.000" height="3.000" fill="#5aa9dc"/><path d="M8.000 6.500h3.000M8.000 8.300h3.000M3.000 10.500h8.000M3.000 12.300h8.000" stroke="#4b4b4b" stroke-width=".800"/></svg>
<div class="abs" style="left:462.3px;top:574px;width:23px;height:2px;background:#3b88d6;"></div>
<div class="abs" style="left:485.3px;top:574px;width:4.2px;height:2px;background:#8fb9e2;"></div>
<svg class="abs" style="left:501px;top:555.3px;" width="16" height="15" viewBox="0 0 16 15"><ellipse cx="7.000" cy="9.000" rx="6.300" ry="4.800" fill="#cfe0ee" stroke="#8aa4b8" stroke-width=".600"/>
      <circle cx="4.000" cy="8.000" r="1.100" fill="#e0453a"/><circle cx="6.700" cy="6.300" r="1.100" fill="#f0b429"/><circle cx="9.600" cy="7.300" r="1.100" fill="#4aa3df"/><circle cx="5.300" cy="11.000" r="1.100" fill="#5db85b"/>
      <path d="M8.300 11.500L14.500 0.800" stroke="#c98a3f" stroke-width="1.600" stroke-linecap="round"/><path d="M8.000 12.000l1.400-2.400" stroke="#4a7fc0" stroke-width="1.800" stroke-linecap="round"/></svg>
<svg class="abs" style="left:534px;top:555.2px;" width="16" height="16" viewBox="0 0 16 16"><defs><radialGradient id="ff" cx=".6" cy=".25" r=".9"><stop offset="0" stop-color="#ffe14d"/><stop offset=".35" stop-color="#ff9a2a"/><stop offset=".75" stop-color="#f4392f"/><stop offset="1" stop-color="#c2246b"/></radialGradient></defs>
      <circle cx="8.000" cy="8.200" r="7.300" fill="url(#ff)"/>
      <circle cx="8.400" cy="8.600" r="3.600" fill="#6a3cc4"/><path d="M4.500 6.500c1.500-1.700 4.000-1.400 5.000-.2-1.500-.2-2.300.8-1.700 1.700.600.900 2.300.7 2.600-.7 1.000 2.000-.700 4.300-3.000 4.300-2.400 0-4.000-2.600-2.900-5.100z" fill="#ff9f2e"/></svg>
<div class="abs" style="left:528.9px;top:574px;width:26.6px;height:2px;background:#3b88d6;"></div>
<div class="abs" style="left:558.8px;top:549px;width:32.8px;height:27px;background:#f4b98c;"></div>
<div class="abs" style="left:558.8px;top:574px;width:32.8px;height:2px;background:#e9751f;"></div>
<svg class="abs" style="left:567px;top:556px;" width="17" height="15" viewBox="0 0 17 15"><circle cx="11.300" cy="3.300" r="2.300" fill="#6c70c8"/><circle cx="15.000" cy="4.600" r="1.500" fill="#6c70c8"/>
      <rect x="7.000" y="6.000" width="7.300" height="7.300" rx="1.800" fill="#6c70c8"/><rect x="12.500" y="6.600" width="4.000" height="5.400" rx="1.300" fill="#7d82d6"/>
      <rect x="0.500" y="2.700" width="9.000" height="9.000" rx=".900" fill="#4b53bc"/>
      <path d="M2.800 5.000h4.400M5.000 5.000v5.000" stroke="#fff" stroke-width="1.200"/>
      <circle cx="13.200" cy="12.000" r="2.600" fill="#d92c3c"/></svg>
<svg class="abs" style="left:813.5px;top:559px;" width="8" height="6" viewBox="0 0 8 6"><path d="M0.600 5.000L3.800 1.500L7.000 5.000" fill="none" stroke="#1a1a1a" stroke-width="1.000"/></svg>
<svg class="abs" style="left:829.5px;top:557px;" width="9" height="12" viewBox="0 0 9 12"><rect x="1.000" y="2.500" width="6.000" height="5.500" rx=".800" fill="none" stroke="#1a1a1a" stroke-width=".900"/><path d="M2.000 0.800h4.000M7.000 4.000l1.700-1.000v4.500l-1.700-1.000M2.500 10.800h3.000" stroke="#1a1a1a" stroke-width=".900" fill="none"/></svg>
<svg class="abs" style="left:844.5px;top:558.5px;" width="11" height="8" viewBox="0 0 11 8"><path d="M2.800 7.300c-1.300 0-2.200-.900-2.200-2.000 0-1.100.900-1.900 2.000-1.900.300-1.500 1.500-2.400 2.900-2.400 1.500 0 2.700 1.000 2.900 2.500 1.200 0 2.000.800 2.000 1.900 0 1.100-.900 1.900-2.000 1.900z" fill="#d9dde1" stroke="#333" stroke-width=".800"/></svg>
<svg class="abs" style="left:861px;top:556.5px;" width="7" height="13" viewBox="0 0 7 13"><rect x="1.000" y="0.500" width="4.600" height="7.800" rx="1.000" fill="#1a1a1a"/><rect x="2.300" y="8.300" width="2.000" height="2.500" fill="#1a1a1a"/><rect x="0.500" y="10.800" width="5.600" height="1.400" fill="#1a1a1a"/></svg>
<svg class="abs" style="left:876.5px;top:559.5px;" width="12" height="7" viewBox="0 0 12 7"><rect x="2.000" y="1.000" width="9.500" height="5.000" fill="#1a1a1a"/><rect x="0.300" y="0.300" width="1.700" height="2.600" fill="#1a1a1a"/><path d="M0.800 3.000v2.500" stroke="#1a1a1a" stroke-width=".800"/></svg>
<svg class="abs" style="left:891.5px;top:557.5px;" width="13" height="11" viewBox="0 0 13 11"><rect x="2.500" y="0.600" width="9.500" height="6.800" fill="none" stroke="#1a1a1a" stroke-width=".900"/><path d="M5.000 9.800h5.000M0.700 2.000v7.800h2.500" stroke="#1a1a1a" stroke-width=".900" fill="none"/></svg>
<svg class="abs" style="left:908px;top:558px;" width="12" height="10" viewBox="0 0 12 10"><path d="M0.500 3.500h1.800l2.200-2.200v7.400L2.300 6.500H0.500z" fill="none" stroke="#1a1a1a" stroke-width=".800"/><path d="M6.300 3.500c.8.800.8 2.200 0 3.000M7.800 2.300c1.500 1.500 1.500 3.900 0 5.400M9.300 1.100c2.200 2.200 2.200 5.600 0 7.800" stroke="#1a1a1a" stroke-width=".800" fill="none"/></svg>
<svg class="abs" style="left:926.5px;top:557px;" width="13" height="12" viewBox="0 0 13 12"><path d="M1.000 9.500c-.800-2.000 1.500-3.500 3.000-2.500 1.500 1.000-.500 3.800-2.000 3.300M4.500 7.500c0-3.000 3.500-6.500 6.500-6.500 1.000 1.500-1.000 4.000-3.500 5.000M6.000 6.000c2.000 0 3.500 1.000 3.000 2.500-.500 1.500-3.000 1.500-3.500 0" fill="none" stroke="#1a1a1a" stroke-width=".900"/></svg>
<div class="t" style="left:956.1px;top:552.3px;font-size:9.0px;height:9.0px;line-height:9.0px;color:#222;transform:scaleX(0.866);">13:00</div>
<div class="t" style="left:947.7px;top:564.5px;font-size:9.0px;height:9.0px;line-height:9.0px;color:#222;transform:scaleX(0.821);">02.12.2020</div>
<svg class="abs" style="left:996px;top:556px;" width="13" height="17" viewBox="0 0 13 17"><path d="M0.800 0.800h9.700v7.800H4.500l-2.200 2.000V8.600H0.800z" fill="#1a1a1a"/><path d="M2.500 3.000h6.300M2.500 4.800h6.300M2.500 6.600h4.000" stroke="#d2e2ee" stroke-width=".700"/><circle cx="11.300" cy="12.000" r="4.300" fill="#e9eef2" stroke="#444" stroke-width=".700"/></svg>
<div class="t" style="left:1005.6px;top:565.1px;font-size:6.3px;height:6.3px;line-height:6.3px;color:#222;font-weight:700;">5</div>
<!-- watermark -->
<div class="abs" style="left:10px;top:528.5px;width:29.8px;height:29.8px;background:rgba(255,255,255,.760);border-radius:50%;"></div>
<svg class="abs" style="left:0px;top:515px;" width="60" height="61" viewBox="0 0 60 61">
      <path d="M28.100 8.400l-.500 5.300" stroke="#cfcfcf" stroke-width=".800" fill="none"/>
      <path d="M28.100 8.300l7.600 3.400-7.300 .900z" fill="#d8d8d8"/>
      <path d="M24.000 24.600l-2.800 3.600 1.500 .200-5.000 3.300" stroke="#3a3a3a" stroke-width=".900" fill="none"/>
      <g fill="none" stroke-linecap="round">
      <path d="M13.000 36.500c6-4.500 13-5.500 20-2.500s12 2.500 18-1.500" stroke="#9a9a9a" stroke-width="2.800" opacity=".55"/>
      <path d="M16.000 41.000c6-4.000 12-4.500 18-2.000s10 1.500 14-1.500" stroke="#9a9a9a" stroke-width="2.600" opacity=".55"/>
      <path d="M20.000 46.000c5-3.500 10-4.000 15-2.000s9 .500 12-2.500" stroke="#9a9a9a" stroke-width="2.400" opacity=".55"/>
      <path d="M13.000 36.000c6-4.500 13-5.500 20-2.500s12 2.500 18-1.500" stroke="#fff" stroke-width="1.900"/>
      <path d="M16.000 40.500c6-4.000 12-4.500 18-2.000s10 1.500 14-1.500" stroke="#fff" stroke-width="1.800"/>
      <path d="M20.000 45.500c5-3.500 10-4.000 15-2.000s9 .500 12-2.500" stroke="#fff" stroke-width="1.600"/>
      </g></svg>
<div class="t" style="left:50.4px;top:540.2px;font-size:20.5px;height:20.5px;line-height:20.5px;color:rgba(255,255,255,.820);font-weight:700;transform:scaleX(1.128);-webkit-text-stroke:1.100px rgba(255,255,255,.820);text-shadow:1.200px 1.200px 1.200px rgba(70,70,70,.750),-.600px -.600px 1px rgba(90,90,90,.450);letter-spacing:0;">mlodaGdynia.pl</div>
</body>
</html>
